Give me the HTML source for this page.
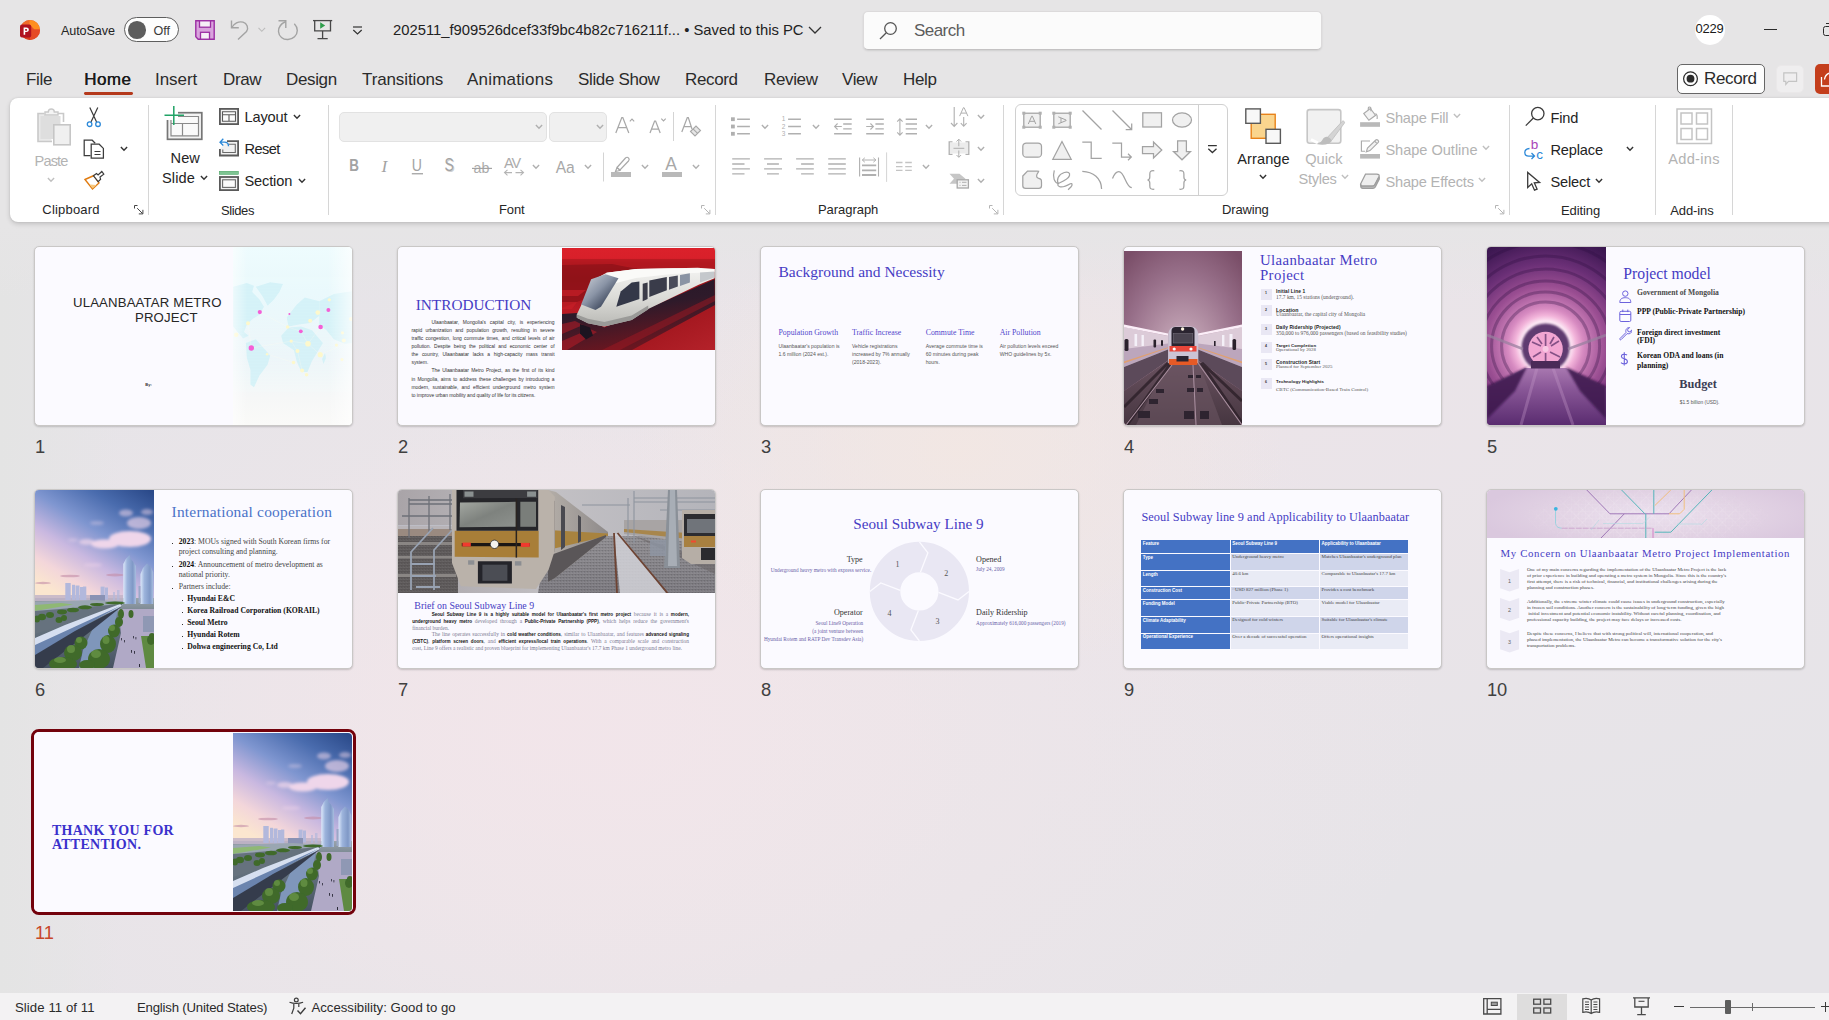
<!DOCTYPE html>
<html><head><meta charset="utf-8"><title>PowerPoint</title>
<style>
*{box-sizing:border-box;margin:0;padding:0}
html,body{width:1829px;height:1020px;overflow:hidden}
body{font-family:"Liberation Sans",sans-serif;color:#242424;position:relative;
 background:
  linear-gradient(90deg, #e4e4e4 0, rgba(228,228,228,0) 120px),
  radial-gradient(ellipse 330px 230px at 960px 450px, rgba(242,231,227,.95), rgba(242,231,227,0) 100%),
  radial-gradient(ellipse 420px 300px at 560px 720px, rgba(242,229,234,.9), rgba(242,229,234,0) 100%),
  radial-gradient(ellipse 800px 520px at 640px 740px, rgba(240,230,234,1), rgba(240,230,234,0) 100%),
  radial-gradient(ellipse 900px 500px at 1250px 400px, rgba(236,228,233,.9), rgba(236,228,233,0) 100%),
  #e6e4e8;}
.abs{position:absolute}
.t{position:absolute;white-space:nowrap;line-height:1}
svg{position:absolute;overflow:visible}
.sl svg[viewBox]{overflow:hidden}
.sl svg.ov{overflow:visible}
/* title bar */
#search{left:862.500px;top:11px;width:459px;height:39px;background:#fbfbfb;border:1px solid #dcdadb;border-bottom-color:#c4c2c3;border-radius:5px;box-shadow:0 1px 2px rgba(0,0,0,.10)}
.tb{top:71.400px;font-size:17px;color:#2b2b2b;letter-spacing:-.35px}
/* ribbon */
#ribbon{left:10px;top:98px;width:1840px;height:124px;background:#fff;border-radius:8px;box-shadow:0 2px 5px rgba(0,0,0,.16),0 0 2px rgba(0,0,0,.10)}
.sep{position:absolute;top:105px;width:1px;height:110px;background:#d6d6d6}
.gl{position:absolute;top:202.600px;font-size:13px;letter-spacing:-.4px;color:#262626;white-space:nowrap;line-height:16px}
.rl{position:absolute;white-space:nowrap;line-height:18px;font-size:14.600px;color:#242424;letter-spacing:-.15px}
.dis{color:#b3b3b3}
/* slides */
.sl{position:absolute;width:319px;height:180px;border:1px solid #c9c7c6;border-radius:5px;background:#fbfaff;overflow:hidden;box-shadow:0 1px 2px rgba(0,0,0,.18)}
.sl>.in{position:absolute;left:0;top:0;width:317px;height:178px;overflow:hidden}
.num{position:absolute;font-size:18.300px;color:#404040;line-height:18.300px}
.serif{font-family:"Liberation Serif",serif}
.sb{top:1000.800px;font-size:13.200px;color:#2b2b2b;letter-spacing:-.2px}
.c3{top:81.800px;font-size:7.800px;color:#5147cc}
.b3{top:95px;font-size:5.080px;line-height:8.050px;color:#555;white-space:nowrap}
.i4a{left:152px;font-size:4.850px;font-weight:bold;color:#1a1a1a;letter-spacing:.1px}
.i4b{left:152px;font-size:5.450px;color:#555}
.i5{left:150px;font-size:7.600px;font-weight:bold;color:#111}
.b6{left:143.700px;font-size:7.700px;color:#444}
.b6 b{color:#111}
.c6{left:152.300px;font-size:7.700px;font-weight:bold;color:#111}
.d6{width:1.500px;height:1.200px;background:#333}
.l7{font-family:"Liberation Serif",serif;font-size:5.450px;line-height:6.600px;height:6.600px;white-space:nowrap;color:#7c7a92}
.l7 b{font-family:"Liberation Sans",sans-serif;font-size:4.600px;color:#151515}
.h8{top:65.800px;font-size:8.100px;color:#333}
.p8{font-size:5.250px;color:#6a5fa8}
.th9{font-size:4.500px;font-weight:bold;color:#fff;padding:.7px 0 0 1.700px;line-height:5px;white-space:nowrap;overflow:hidden}
.td9{font-family:"Liberation Serif",serif;font-size:4.900px;color:#444;padding:0 0 0 1.700px;line-height:5.600px;white-space:nowrap;overflow:hidden}
.p10{left:39.900px;font-family:"Liberation Serif",serif;font-size:4.980px;line-height:6.080px;color:#444;white-space:nowrap}
/* status */
#status{left:0;top:993px;width:1829px;height:27px;background:#f3f2f3}
</style></head><body>

<div class="abs" style="left:0;top:0;width:1829px;height:300px;background:linear-gradient(#e6e5e6 0,#e6e5e6 225px,rgba(230,229,230,0) 300px)"></div>
<!-- ================= TITLE BAR ================= -->
<div id="titlebar">
<div class="abs" id="search"></div>
<!-- ppt logo -->
<svg style="left:20px;top:20px" width="20" height="20" viewBox="0 0 20 20">
 <defs><clipPath id="lc"><circle cx="10" cy="10" r="10"/></clipPath></defs>
 <g clip-path="url(#lc)">
  <rect width="20" height="20" fill="#e8502a"/>
  <path d="M9 0h11v9.5h-5.5L9 4z" fill="#ff8f1f"/>
  <path d="M0 0h9.5v6H0z" fill="#ef6a2a"/>
  <path d="M9 9.5h11V20H9z" fill="#e64a25"/>
  <path d="M0 10h10v10H0z" fill="#d83b1d"/>
 </g>
 <rect x="0" y="4.6" width="11.2" height="13" rx="2" fill="#b0121f"/>
 <path d="M3.6 7.6h2.7c1.6 0 2.5.9 2.5 2.2s-1 2.3-2.6 2.3H5.2v2.6H3.6zM5.2 9v1.8h.9c.7 0 1.1-.3 1.1-.9S6.800 9 6.100 9z" fill="#fff"/>
</svg>
<span class="t" style="left:61px;top:24.900px;font-size:12.6px;letter-spacing:-.1px;color:#242424" id="autosave">AutoSave</span>
<div class="abs" style="left:124px;top:17px;width:55px;height:25px;border:1px solid #5e5e5e;border-radius:13px;background:#fdfdfd"></div>
<div class="abs" style="left:128px;top:21px;width:17.6px;height:17.6px;border-radius:50%;background:#5d5d5d"></div>
<span class="t" style="left:153.500px;top:24.900px;font-size:12.6px;color:#3a3a3a" id="off">Off</span>
<!-- save -->
<svg style="left:195px;top:20px" width="20" height="20" viewBox="0 0 20 20">
 <path d="M.8.800h18.400v18.400H3.200L.8 16.800z" fill="#d9a3dd" stroke="#9b2ea3" stroke-width="1.400"/>
 <rect x="4.500" y=".8" width="11" height="6.400" fill="#f6eef7" stroke="#9b2ea3" stroke-width="1.300"/>
 <rect x="5.500" y="12.300" width="9" height="6.900" fill="#f6eef7" stroke="#9b2ea3" stroke-width="1.300"/>
</svg>
<!-- undo -->
<svg style="left:230px;top:19px" width="20" height="22" viewBox="0 0 20 22" fill="none" stroke="#a3a3a3" stroke-width="1.400">
 <path d="M1.500 1.500v7.300h7.300"/><path d="M1.800 8.500C4 4.800 8.500 1.800 13 3.200c4 1.300 6 5.500 3.500 9.300L8 20.500"/>
</svg>
<svg style="left:258px;top:27px" width="8" height="6" viewBox="0 0 8 6" fill="none" stroke="#bdbdbd" stroke-width="1.100"><path d="M.5.800L3.800 4.300 7.100.8"/></svg>
<!-- redo -->
<svg style="left:277px;top:19px" width="22" height="22" viewBox="0 0 22 22" fill="none" stroke="#a3a3a3" stroke-width="1.400">
 <path d="M1.500 1.800h7.300v7.300"/><path d="M8.800 2.500C4.500 4.500 1.300 8.500 1.500 12.500c.3 5 4.500 8.300 9.500 8 5-.3 9.300-4.200 9.300-9 0-3-1.200-5-3-6.800"/>
</svg>
<!-- present -->
<svg style="left:313px;top:19px" width="20" height="21" viewBox="0 0 20 21" fill="none" stroke="#484848" stroke-width="1.300">
 <path d="M0 1.600h19.200"/><path d="M1.700 1.600v10.300h15.800V1.600"/><path d="M9.600 12v7.500M4.500 19.600h10.200"/>
 <path d="M7.200 3.300l5 3.200-5 3.200z" fill="#2f9e4c" stroke="none"/>
</svg>
<!-- qat -->
<svg style="left:352px;top:26px" width="11" height="10" viewBox="0 0 11 10" fill="none" stroke="#333" stroke-width="1.200"><path d="M1 1h9"/><path d="M1.300 4l4.200 4 4.200-4"/></svg>
<span class="t" style="left:393px;top:23px;font-size:14.800px;letter-spacing:-.01px;color:#222" id="title">202511_f909526dcef33f9bc4b82c716211f... • Saved to this PC</span>
<svg style="left:808px;top:26px" width="14" height="9" viewBox="0 0 14 9" fill="none" stroke="#333" stroke-width="1.300"><path d="M1 1l6 6 6-6"/></svg>
<!-- search icon -->
<svg style="left:879px;top:20.500px" width="19" height="19" viewBox="0 0 19 19" fill="none" stroke="#555" stroke-width="1.300"><circle cx="11.500" cy="7.500" r="5.800"/><path d="M7.300 11.700L1 18"/></svg>
<span class="t" style="left:914px;top:21.500px;font-size:17px;letter-spacing:-.55px;color:#5c5c5c" id="searcht">Search</span>
<div class="abs" style="left:1695px;top:15px;width:30px;height:30px;border-radius:50%;background:#fff"></div>
<span class="t" style="left:1695.500px;top:21.500px;font-size:13px;color:#1a1a1a;letter-spacing:-.2px" id="av">0229</span>
<div class="abs" style="left:1764px;top:29px;width:13px;height:1.300px;background:#2a2a2a"></div>
<div class="abs" style="left:1823px;top:25.500px;width:12px;height:10.500px;border:1.300px solid #2a2a2a;border-radius:2.500px"></div>
<div class="abs" style="left:1826px;top:23.200px;width:8px;height:1.300px;background:#2a2a2a"></div>
</div>

<!-- ================= TABS ================= -->
<div id="tabs">
<span class="t tb" style="left:26px">File</span>
<span class="t tb" style="left:84px;color:#1b1b1b;text-shadow:.4px 0 0 #1b1b1b;letter-spacing:.45px">Home</span>
<span class="t tb" style="left:155px;letter-spacing:-.05px">Insert</span>
<span class="t tb" style="left:223px">Draw</span>
<span class="t tb" style="left:286px">Design</span>
<span class="t tb" style="left:362px;letter-spacing:-.12px">Transitions</span>
<span class="t tb" style="left:467px;letter-spacing:.2px">Animations</span>
<span class="t tb" style="left:578px">Slide Show</span>
<span class="t tb" style="left:685px">Record</span>
<span class="t tb" style="left:764px">Review</span>
<span class="t tb" style="left:842px">View</span>
<span class="t tb" style="left:903px">Help</span>
<div class="abs" style="left:84px;top:92px;width:49px;height:2.800px;border-radius:1.400px;background:#b5391c"></div>
<div class="abs" style="left:1677px;top:64px;width:88px;height:30px;border:1px solid #666;border-radius:5px;background:#fdfdfd"></div>
<svg style="left:1683px;top:71px" width="16" height="16" viewBox="0 0 16 16"><circle cx="7.500" cy="7.700" r="6.900" fill="none" stroke="#2b2b2b" stroke-width="1.200"/><circle cx="7.500" cy="7.700" r="3.900" fill="#2b2b2b"/></svg>
<span class="t tb" style="left:1704px;top:70.400px" id="rec">Record</span>
<div class="abs" style="left:1776px;top:65px;width:28px;height:28px;border-radius:5px;background:#efeeef;border:1px solid #eae8e9"></div>
<svg style="left:1783px;top:72px" width="15" height="14" viewBox="0 0 15 14" fill="none" stroke="#c4c4c4" stroke-width="1.200"><path d="M.8.800h12.800v8.600H5.500L2.800 12.400V9.400H.8z"/></svg>
<div class="abs" style="left:1815px;top:64px;width:30px;height:30px;border-radius:5px;background:#c43e1c"></div>
<svg style="left:1820px;top:70px" width="12" height="18" viewBox="0 0 12 18" fill="none" stroke="#fff" stroke-width="1.300"><path d="M1.500 7v9h10"/><path d="M4.500 9.500c.5-4 3-6.500 7.500-7"/></svg>
</div>

<!-- ================= RIBBON ================= -->
<div class="abs" id="ribbon"></div>
<div id="rb">
<svg width="0" height="0"><defs>
 <symbol id="chv" viewBox="0 0 8 5" overflow="visible"><path d="M.9.100L4 3.300 7.100.1" fill="none" stroke-width="1.400"/></symbol>
 <symbol id="dlg" viewBox="0 0 10 10" overflow="visible"><path d="M.5 3.500V.5h3M3.200 3.200l5.300 5.300M4.800 8.900h4.100V4.800" fill="none" stroke-width="1"/></symbol>
</defs></svg>
<!-- ===== Clipboard ===== -->
<svg style="left:37px;top:108px" width="35" height="38" viewBox="0 0 35 38">
 <path d="M7.500 5.500H1v28h14" fill="#e9e9e9" stroke="#c9c9c9" stroke-width="1.600"/>
 <path d="M21 5.500h5.500V14" fill="none" stroke="#c9c9c9" stroke-width="1.600"/>
 <path d="M3.500 8h20v8H16v15H3.500z" fill="#dedede"/>
 <path d="M8 7V4h3.300a3 3 0 016 0H21v3z" fill="#f4f4f4" stroke="#c9c9c9" stroke-width="1.400"/>
 <rect x="16.800" y="16.800" width="16.400" height="20" fill="#f0f0f0" stroke="#c6c6c6" stroke-width="1.600"/>
</svg>
<span class="rl dis" style="left:34.500px;top:151.700px;letter-spacing:-.85px" id="paste">Paste</span>
<svg style="left:47px;top:178px" width="8" height="5" stroke="#c0c0c0"><use href="#chv"/></svg>
<!-- cut -->
<svg style="left:86px;top:107px" width="16" height="21" viewBox="0 0 16 21" fill="none">
 <path d="M3.800.5L10.600 15M11.800.5L5 15" stroke="#3b3b3b" stroke-width="1.200"/>
 <circle cx="3.600" cy="17.200" r="2.300" stroke="#2b88d8" stroke-width="1.300"/><circle cx="12" cy="17.200" r="2.300" stroke="#2b88d8" stroke-width="1.300"/>
</svg>
<!-- copy -->
<svg style="left:83px;top:139px" width="22" height="20" viewBox="0 0 22 20" fill="none" stroke="#3b3b3b" stroke-width="1.250">
 <path d="M7.500 16.500H1.200V1.200h8l3 3"/><path d="M8.200 5.200h8l4.200 4.200v9.800H8.200z" fill="#fff"/><path d="M11.500 12.500h6M11.500 15.500h6" stroke-width="1"/>
</svg>
<svg style="left:119.500px;top:146.500px" width="8" height="5" stroke="#333"><use href="#chv"/></svg>
<!-- format painter -->
<svg style="left:84px;top:170px" width="21" height="20" viewBox="0 0 21 20" fill="none">
 <path d="M1 9.500l9-4 5 7.500-6.500 6z" fill="#fff" stroke="#e07b10" stroke-width="1.400"/>
 <path d="M5.500 14.500l3 4 4-3.600z" fill="#f7c77c"/>
 <path d="M9.500 5.800l3-2.200 1.600 1.300L17.800 1.500l2 2.600-3.800 3 .6 2.200-2.400 2.300z" fill="#fff" stroke="#3b3b3b" stroke-width="1.200"/>
</svg>
<span class="gl" style="left:42.300px;letter-spacing:.2px;top:201.700px" id="g1">Clipboard</span>
<svg style="left:134px;top:205px" width="10" height="10" stroke="#444"><use href="#dlg"/></svg>
<div class="sep" style="left:148px"></div>
<!-- ===== Slides ===== -->
<svg style="left:164px;top:106px" width="39" height="35" viewBox="0 0 39 35" fill="none">
 <rect x="3.500" y="6.700" width="34.300" height="26.600" fill="#f3f3f3" stroke="#767676" stroke-width="1.700"/>
 <path d="M7 10.500h27.500v19.300H7z" stroke="#8a8a8a" stroke-width="1.200" fill="#fafafa"/>
 <path d="M7 17.500h27.500M18.500 17.500v12.300" stroke="#8a8a8a" stroke-width="1.200"/>
 <rect x="0" y="0" width="14" height="14" fill="#fff" stroke="none"/>
 <path d="M9.800 0v19M.5 9.300h19.500" stroke="#21a366" stroke-width="1.500"/>
</svg>
<span class="rl" style="left:170.500px;top:149.400px;letter-spacing:.1px" id="new">New</span>
<span class="rl" style="left:162px;top:169.400px;letter-spacing:.1px" id="slide">Slide</span>
<svg style="left:199.500px;top:176px" width="8" height="5" stroke="#333"><use href="#chv"/></svg>
<!-- layout -->
<svg style="left:219px;top:108px" width="20" height="17" viewBox="0 0 20 17" fill="none" stroke="#5a5a5a">
 <rect x=".9" y=".9" width="18.200" height="15.200" stroke-width="1.800" fill="#f1f1f1"/><path d="M3.500 3.700h13v9.600h-13zM3.500 6.800h13M10 6.800v6.500" stroke-width="1.100" fill="#fbfbfb"/>
</svg>
<span class="rl" style="left:244.500px;top:108.300px" id="layout">Layout</span>
<svg style="left:292.500px;top:114.500px" width="8" height="5" stroke="#333"><use href="#chv"/></svg>
<!-- reset -->
<svg style="left:219px;top:138px" width="20" height="19" viewBox="0 0 20 19" fill="none">
 <path d="M8 3.200h11.100v14.300H.9V11" stroke="#5a5a5a" stroke-width="1.800" fill="#f1f1f1"/><path d="M9.500 6.300h6.800v8.200H3.800v-3" stroke="#6a6a6a" stroke-width="1.100"/>
 <path d="M4.300.8L1 4.200l3.300 3.300M1.200 4.200h4.300c2.500 0 4 1.600 4 4" stroke="#2b88d8" stroke-width="1.300"/>
</svg>
<span class="rl" style="left:244.500px;top:140.300px;letter-spacing:-.6px" id="reset">Reset</span>
<!-- section -->
<svg style="left:219px;top:171px" width="20" height="20" viewBox="0 0 20 20" fill="none">
 <rect x=".3" y=".3" width="19" height="3" fill="#7ec492" stroke="#4ea667" stroke-width=".6"/>
 <rect x=".9" y="6" width="18.200" height="13.100" stroke="#5a5a5a" stroke-width="1.800" fill="#f1f1f1"/><rect x="3.600" y="8.800" width="12.800" height="7.600" stroke="#6a6a6a" stroke-width="1.100" fill="#fbfbfb"/>
</svg>
<span class="rl" style="left:244.500px;top:172.400px" id="section">Section</span>
<svg style="left:297.500px;top:178.500px" width="8" height="5" stroke="#333"><use href="#chv"/></svg>
<span class="gl" style="left:221px" id="g2">Slides</span>
<div class="sep" style="left:328px"></div>
<!-- ===== Font ===== -->
<div class="abs" style="left:339px;top:112px;width:208px;height:30px;background:#f0f0f0;border:1px solid #e2e2e2;border-radius:5px"></div>
<svg style="left:535px;top:125px" width="8" height="5" stroke="#b0b0b0"><use href="#chv"/></svg>
<div class="abs" style="left:549px;top:112px;width:58px;height:30px;background:#f0f0f0;border:1px solid #e2e2e2;border-radius:5px"></div>
<svg style="left:595.500px;top:125px" width="8" height="5" stroke="#b0b0b0"><use href="#chv"/></svg>
<svg style="left:615px;top:114px" width="90" height="26" viewBox="0 0 90 26" fill="none" stroke="#a8a8a8" stroke-width="1.250">
 <path d="M.8 19L6.800 3.500h1L13.800 19M3 13.500h8.600"/><path d="M14.800 7.300l2.200-2.300 2.200 2.300" stroke-width="1.100"/>
 <path d="M35 19l4.600-12h1L45.200 19M36.800 15h6.600"/><path d="M46.300 4.600l2.200 2.300 2.200-2.300" stroke-width="1.100"/>
 <path d="M58.500-2v29" stroke="#d4d4d4" stroke-width="1"/>
 <path d="M66.800 18L72.300 3.500h1L77 15M69 12.500h7"/>
 <path d="M75.500 17.500l5.500-5.500 4.500 4.500-5.500 5.500zM78 14.800l4.600 4.600" fill="#e6e6e6" stroke-width="1.100"/>
</svg>
<svg style="left:345px;top:152px" width="360" height="30" viewBox="0 0 360 30">
 <g fill="#a3a3a3" font-family="Liberation Sans, sans-serif">
  <text x="4.300" y="19.500" font-size="17.200" font-weight="bold" transform="translate(4.300 0) scale(.78 1) translate(-4.300 0)">B</text>
  <text x="36.500" y="19.500" font-size="17.200" font-style="italic" font-family="Liberation Serif, serif">I</text>
  <text x="66.800" y="19.300" font-size="16.800" transform="translate(66.800 0) scale(.84 1) translate(-66.800 0)">U</text>
  <rect x="66.800" y="21.100" width="11.200" height="1.300"/>
  <text x="100.600" y="20.300" font-size="17.500" fill="#d0d0d0" transform="translate(100.600 0) scale(.8 1) translate(-100.600 0)">S</text>
  <text x="99.600" y="19.500" font-size="17.500" transform="translate(99.600 0) scale(.8 1) translate(-99.600 0)">S</text>
  <text x="128.500" y="21.300" font-size="15" transform="translate(128.500 0) scale(.95 1) translate(-128.500 0)" fill="#ababab">ab</text>
  <rect x="127" y="15.800" width="20" height="1.200"/>
  <text x="159" y="16" font-size="14.500" letter-spacing="-1.200" fill="#ababab">AV</text>
 </g>
 <g fill="none" stroke="#b4b4b4" stroke-width="1.100">
  <path d="M159.500 20.600h7.500M162.500 17.800l-3 2.800 3 2.800M170.500 20.600h8M175.500 17.800l3 2.800-3 2.800"/>
 </g>
 <g fill="#a8a8a8" font-family="Liberation Sans, sans-serif"><text x="210.800" y="21.300" font-size="17" letter-spacing="-.3" transform="translate(210.800 0) scale(.92 1) translate(-210.800 0)">Aa</text></g>
 <path d="M258.500 .5v29" stroke="#d4d4d4" stroke-width="1" fill="none"/>
 <!-- highlighter -->
 <g fill="none" stroke="#a8a8a8" stroke-width="1.200"><path d="M272 15.500l8.500-9.500c1-1 2.200-1 3 0 .9.900.9 2 0 3l-8.500 9zM270.500 19.500l1.500-4 3 3z"/></g>
 <rect x="266" y="20" width="20" height="5" fill="#b9b9b9"/>
 <g fill="#a8a8a8" font-family="Liberation Sans, sans-serif"><text x="320.200" y="17.500" font-size="17.500">A</text></g>
 <rect x="317" y="20" width="20" height="5" fill="#b9b9b9"/>
</svg>
<svg style="left:532px;top:165px" width="8" height="5" stroke="#b0b0b0"><use href="#chv"/></svg>
<svg style="left:583.500px;top:165px" width="8" height="5" stroke="#b0b0b0"><use href="#chv"/></svg>
<svg style="left:640.500px;top:165px" width="8" height="5" stroke="#b0b0b0"><use href="#chv"/></svg>
<svg style="left:691.500px;top:165px" width="8" height="5" stroke="#b0b0b0"><use href="#chv"/></svg>
<span class="gl" style="left:499px;letter-spacing:-.1px;top:201.700px" id="g3">Font</span>
<svg style="left:701px;top:205px" width="10" height="10" stroke="#b4b4b4"><use href="#dlg"/></svg>
<div class="sep" style="left:715px"></div>
<!-- ===== Paragraph ===== -->
<svg style="left:720px;top:100px" width="290" height="100" viewBox="0 0 290 100" fill="none" stroke="#b0b0b0" stroke-width="1.400">
 <!-- bullets -->
 <g fill="#b0b0b0" stroke="none"><rect x="11" y="17.300" width="3.800" height="3.800"/><rect x="11" y="24.600" width="3.800" height="3.800"/><rect x="11" y="31.900" width="3.800" height="3.800"/></g>
 <path d="M17.100 19.200h12.800M17.100 26.500h12.800M17.100 33.800h12.800"/>
 <!-- numbering -->
 <g fill="#b0b0b0" stroke="none" font-family="Liberation Sans, sans-serif" font-size="6.500"><text x="61.800" y="21.400">1</text><text x="61.800" y="28.900">2</text><text x="61.800" y="36.400">3</text></g>
 <path d="M68.100 19.200h12.800M68.100 26.500h12.800M68.100 33.800h12.800"/>
 <!-- decrease indent -->
 <path d="M114.100 19.200h17.600M114.100 33.800h17.600M123.200 24h8.500M123.200 28.900h8.500"/>
 <path d="M114.600 26.500h7.200M117.600 23.500l-3 3 3 3" stroke-width="1.100"/>
 <!-- increase indent -->
 <path d="M146.200 19.200h17.600M146.200 33.800h17.600M155.400 24h8.400M155.400 28.900h8.400"/>
 <path d="M146.200 26.500h7.200M150.400 23.500l3 3-3 3" stroke-width="1.100"/>
 <!-- line spacing -->
 <path d="M185.700 19.200H197M185.700 24H197M185.700 28.900H197M185.700 33.800H197"/>
 <path d="M179.900 19v16M177.200 21.600l2.700-2.800 2.700 2.800M177.200 32.400l2.700 2.800 2.700-2.800" stroke-width="1.100"/>
 <!-- align row -->
 <path d="M12.200 58.900h17.700M12.200 64h12.300M12.200 68.900h17.700M12.200 73.900h12.300"/>
 <path d="M44.100 58.900H62M47 64h11.900M44.100 68.900H62M47 73.900h11.900"/>
 <path d="M76.100 58.900h17.700M81.100 64h12.700M76.100 68.900h17.700M81.100 73.900h12.700"/>
 <path d="M108.200 58.900h17.600M108.200 64h17.600M108.200 68.900h17.600M108.200 73.900h17.600"/>
 <!-- distributed -->
 <path d="M139.600 57.400v19.100M158.500 57.400v19.100" stroke-width="1.100"/>
 <path d="M142.300 60h13.600M144.800 57.800l-2.500 2.200 2.500 2.200M153.400 57.800l2.500 2.200-2.500 2.200" stroke-width="1"/>
 <path d="M142 65.400h14.200M142 70.400h14.200M142 75h14.200" stroke-width="1.800"/>
 <path d="M166.600 52.400v29.500" stroke="#d4d4d4" stroke-width="1"/>
 <!-- columns -->
 <path d="M176 62.500h6.500M176 66.600h6.500M176 70.400h6.500M185.200 62.500h6.600M185.200 66.600h6.600M185.200 70.400h6.600" stroke="#c4c4c4" stroke-width="1.300"/>
 <!-- text direction -->
 <path d="M234.200 6.900v19.300M231 23l3.200 3.400 3.200-3.400M243.700 17v9.300M240.800 23.200l2.900 3.100 2.900-3.100" stroke-width="1.100"/>
 <path d="M239.600 16.100l3.800-8.400h.7l3.800 8.400M241 13.100h5.500" stroke-width="1"/>
 <!-- align text -->
 <path d="M232.500 41.800h-3.300v12.500h3.300M245.500 41.800h3.300v12.500h-3.300" stroke-width="1.300"/>
 <rect x="230" y="42.500" width="18" height="11" fill="#ececec" stroke="none"/>
 <path d="M233.500 48.300h10.800M238.800 39.300v7M236.500 41.500l2.300-2.300 2.300 2.300M238.800 50.500v6.700M236.500 55l2.300 2.300 2.300-2.300" stroke-width="1"/>
 <!-- smartart -->
 <path d="M229.500 73.800h10l6 5-6 5h-10l4.500-5z" fill="#c6c6c6" stroke="none"/>
 <rect x="237.200" y="79.800" width="11.200" height="8.200" fill="#f3f3f3" stroke="#a8a8a8" stroke-width="1.300"/>
 <path d="M239.500 82.300h1M242 82.300h4.500M239.500 85.400h1M242 85.400h4.500" stroke-width="1"/>
</svg>
<svg style="left:760.500px;top:125px" width="8" height="5" stroke="#b0b0b0"><use href="#chv"/></svg>
<svg style="left:811.500px;top:125px" width="8" height="5" stroke="#b0b0b0"><use href="#chv"/></svg>
<svg style="left:924.500px;top:125px" width="8" height="5" stroke="#b0b0b0"><use href="#chv"/></svg>
<svg style="left:921.500px;top:165px" width="8" height="5" stroke="#b0b0b0"><use href="#chv"/></svg>
<svg style="left:976.500px;top:114.800px" width="8" height="5" stroke="#b0b0b0"><use href="#chv"/></svg>
<svg style="left:976.500px;top:146.800px" width="8" height="5" stroke="#b0b0b0"><use href="#chv"/></svg>
<svg style="left:976.500px;top:178.800px" width="8" height="5" stroke="#b0b0b0"><use href="#chv"/></svg>
<span class="gl" style="left:818px;letter-spacing:-.05px;top:201.700px" id="g4">Paragraph</span>
<svg style="left:989px;top:205px" width="10" height="10" stroke="#b4b4b4"><use href="#dlg"/></svg>
<div class="sep" style="left:1003px"></div>
<!-- ===== Drawing ===== -->
<div class="abs" style="left:1015px;top:104px;width:213px;height:92px;border:1px solid #d0d0d0;border-radius:6px;background:#fff"></div>
<div class="abs" style="left:1198px;top:105px;width:1px;height:90px;background:#d0d0d0"></div>
<svg style="left:1015px;top:104px" width="214" height="92" viewBox="0 0 214 92" fill="none" stroke="#a3a3a3" stroke-width="1.250">
 <!-- row1 -->
 <rect x="8.800" y="9.200" width="16.400" height="14" fill="#f0f0f0"/>
 <g fill="#b0b0b0" stroke="none"><rect x="7.300" y="7.700" width="3" height="3"/><rect x="23.700" y="7.700" width="3" height="3"/><rect x="7.300" y="21.700" width="3" height="3"/><rect x="23.700" y="21.700" width="3" height="3"/></g>
 <path d="M13.300 20l3.400-7.800h.7L20.800 20M14.500 17.300h5.100" stroke-width="1"/>
 <rect x="38.800" y="9.200" width="16.400" height="14" fill="#f0f0f0"/>
 <g fill="#b0b0b0" stroke="none"><rect x="37.300" y="7.700" width="3" height="3"/><rect x="53.700" y="7.700" width="3" height="3"/><rect x="37.300" y="21.700" width="3" height="3"/><rect x="53.700" y="21.700" width="3" height="3"/></g>
 <path d="M43.300 12.800l7.800 3.200v.6l-7.800 3.200M46 14v4.800" stroke-width="1"/>
 <path d="M67.500 6.500l19 19"/>
 <path d="M97.500 6.500l19 19M116.700 19.500v6h-6"/>
 <rect x="127.800" y="8.800" width="18.700" height="14.200" fill="#f0f0f0"/>
 <ellipse cx="167" cy="16" rx="9.500" ry="7.200" fill="#f0f0f0"/>
 <!-- row2 -->
 <rect x="7.800" y="39" width="18.700" height="14.200" rx="3.500" fill="#f0f0f0"/>
 <path d="M47 37.500L37.800 55.300h18.400z" fill="#f0f0f0"/>
 <path d="M67.300 38.200h8.900v16.200h10.500"/>
 <path d="M97.300 39h9.200v14h9.500M113 49.800l3.300 3.200-3.300 3.200"/>
 <path d="M127.500 42.500h11V38l8.300 8-8.300 8v-4.500h-11z" fill="#f0f0f0"/>
 <path d="M162.600 36.800h8.800v10.700h4.100L167 55.800l-8.500-8.300h4.100z" fill="#f0f0f0"/>
 <!-- row3 -->
 <path d="M7.800 72l4.700-5h9.500c2.200 0 2.200 0 1 1.600-1.800 2.300-2 4.700.2 5.500 3.300 1 3.300 1.700 3.300 4.500v3.200c0 1.800-1.200 2.600-2.800 2.600H10.600c-1.700 0-2.800-.8-2.800-2.600z" fill="#f0f0f0"/>
 <path d="M39.300 66.400c-2 7 0 12.500 4.500 13.600M43.800 80c-3-4-.5-9.500 5.500-11.500 3.500-1.200 6 .3 5.200 3-.8 3-5.800 5.600-10.200 7.500-2 .8-2 2.500 0 3.500 3 1.500 8-1 11-2.700 1.800-1 2.500 1 .8 3l-3 3"/>
 <path d="M67.300 67.400c11 .3 19 7 19.300 17.600"/>
 <path d="M97.500 74.500c1.500-4 3.500-7 6.300-7 6 0 6.500 15.500 13 16.200"/>
 <path d="M139.300 66.800c-3.800-.4-4.500.8-4.500 3.400v2.800c0 1.800-.6 2.800-2.300 3 1.700.2 2.300 1.200 2.300 3v2.800c0 2.600.7 3.800 4.500 3.400"/>
 <path d="M164.400 66.800c3.800-.4 4.500.8 4.500 3.400v2.800c0 1.800.6 2.800 2.300 3-1.700.2-2.300 1.200-2.300 3v2.800c0 2.600-.7 3.800-4.500 3.400"/>
 <!-- expander -->
 <path d="M193 41.700h8.800M193.300 44.800l4.100 3.700 4.100-3.700" stroke="#333" stroke-width="1.300"/>
</svg>
<!-- arrange -->
<svg style="left:1244px;top:107px" width="38" height="38" viewBox="0 0 38 38">
 <rect x="7.200" y="7.300" width="24" height="24" fill="#fad58e" stroke="#e8821a" stroke-width="1.400"/>
 <rect x="1.800" y="1.900" width="14.600" height="14.400" fill="#f8f8f8" stroke="#5a5a5a" stroke-width="1.400"/>
 <rect x="22" y="22.300" width="14.400" height="14" fill="#f8f8f8" stroke="#5a5a5a" stroke-width="1.400"/>
</svg>
<span class="rl" style="left:1237.300px;top:150.300px;letter-spacing:.07px" id="arrange">Arrange</span>
<svg style="left:1258.500px;top:175.300px" width="8" height="5" stroke="#333"><use href="#chv"/></svg>
<!-- quick styles -->
<svg style="left:1305px;top:107px" width="42" height="40" viewBox="0 0 42 40">
 <rect x="2.200" y="2.600" width="33.600" height="33.600" rx="2.500" fill="#f1f1f1" stroke="#c6c6c6" stroke-width="1.600"/>
 <path d="M6 32.500l7 3.500" stroke="#fff" stroke-width="3"/>
 <path d="M38.800 14.200c.8.500.9 1.300.5 2.100L26.500 33.500l-4.300-2.800L37 14.600c.5-.6 1.200-.8 1.800-.4z" fill="#d4d4d4" stroke="#bcbcbc" stroke-width=".8"/>
 <path d="M22.800 30c2.300 1 3.600 2.300 4 4-2 3.300-8 4.500-15.500 3 3.800-.7 5-2.300 6.300-4.500 1.300-2 3-3 5.200-2.500z" fill="#bdbdbd"/>
</svg>
<span class="rl dis" style="left:1305.300px;top:150.300px;letter-spacing:-.03px" id="quick">Quick</span>
<span class="rl dis" style="left:1298.600px;top:170.100px;letter-spacing:-.3px" id="styles">Styles</span>
<svg style="left:1340.500px;top:174.800px" width="8" height="5" stroke="#c0c0c0"><use href="#chv"/></svg>
<!-- shape fill -->
<svg style="left:1360px;top:106px" width="21" height="22" viewBox="0 0 21 22" fill="none" stroke="#ababab" stroke-width="1.150">
 <path d="M3.800 7.500l6.500-5 5.300 6.800-6.700 5z" fill="#f3f3f3"/><path d="M8.300 4V2.300c0-1.800 2.600-1.800 2.600 0v3"/><path d="M15.500 7.500c1.500.8 2 2.800 1.600 5.500"/>
 <rect x=".1" y="16.200" width="19.900" height="4.600" fill="#b9b9b9" stroke="none"/>
</svg>
<span class="rl dis" style="left:1385.400px;top:108.900px;letter-spacing:-.2px" id="sfill">Shape Fill</span>
<svg style="left:1453.300px;top:114px" width="8" height="5" stroke="#c0c0c0"><use href="#chv"/></svg>
<!-- shape outline -->
<svg style="left:1360px;top:138px" width="21" height="22" viewBox="0 0 21 22" fill="none" stroke="#ababab" stroke-width="1.150">
 <path d="M10 3H1.400v10.200H5"/><path d="M6.300 13.800l1.200-3.800 8.300-8c1.300-1.200 3.700 1 2.500 2.400L10 12.600zM14.600 3.200l2.500 2.500" fill="#f3f3f3"/>
 <rect x=".1" y="16" width="19.900" height="4.600" fill="#b9b9b9" stroke="none"/>
</svg>
<span class="rl dis" style="left:1385.400px;top:140.700px;letter-spacing:-.03px" id="sout">Shape Outline</span>
<svg style="left:1482.400px;top:146px" width="8" height="5" stroke="#c0c0c0"><use href="#chv"/></svg>
<!-- shape effects -->
<svg style="left:1360px;top:173px" width="21" height="17" viewBox="0 0 21 17" fill="none" stroke="#9e9e9e" stroke-width="1.200">
 <path d="M.7 10.800L5.500 1.200h11.200c2 0 3 .8 2.300 2.400l-4.200 8.200c-.5 1-1.300 1.400-2.500 1.400H2.300c-1.400 0-2.200-1-1.600-2.400z" fill="#efefef"/>
 <path d="M.7 10.800v2.300c0 1.400.8 2.400 2.200 2.400h9.800c1.200 0 2-.5 2.600-1.500l4-8V3.500l-4.500 8.300c-.5 1-1.300 1.400-2.500 1.400H2.300c-1 0-1.600-1-1.600-2.400z" fill="#b5b5b5"/>
</svg>
<span class="rl dis" style="left:1385.400px;top:172.700px;letter-spacing:-.17px" id="seff">Shape Effects</span>
<svg style="left:1478.300px;top:178px" width="8" height="5" stroke="#c0c0c0"><use href="#chv"/></svg>
<span class="gl" style="left:1222px;letter-spacing:-.15px;top:201.700px" id="g5">Drawing</span>
<svg style="left:1495px;top:205px" width="10" height="10" stroke="#b4b4b4"><use href="#dlg"/></svg>
<div class="sep" style="left:1509px"></div>
<!-- ===== Editing ===== -->
<svg style="left:1525px;top:106px" width="21" height="21" viewBox="0 0 21 21" fill="none" stroke="#3b3b3b" stroke-width="1.300"><circle cx="12.800" cy="7.600" r="6.200"/><path d="M8.400 12L.8 19.600"/></svg>
<span class="rl" style="left:1550.400px;top:108.900px" id="find">Find</span>
<svg style="left:1524px;top:139px" width="21" height="21" viewBox="0 0 21 21" fill="none">
 <path d="M5.500 9.500C2 9.800.8 12 .8 13.500c0 2 1.500 3.600 4 3.600h5.500M7.500 14l3 3-3 3" stroke="#2b88d8" stroke-width="1.300"/>
 <text x="6.800" y="10.300" font-family="Liberation Sans, sans-serif" font-size="13.500" fill="#a846b8">b</text>
 <text x="12.300" y="20.300" font-family="Liberation Sans, sans-serif" font-size="13.500" fill="#2b88d8">c</text>
</svg>
<span class="rl" style="left:1550.400px;top:140.700px" id="replace">Replace</span>
<svg style="left:1625.500px;top:146.500px" width="8" height="5" stroke="#333"><use href="#chv"/></svg>
<svg style="left:1526px;top:171px" width="16" height="21" viewBox="0 0 16 21" fill="none" stroke="#3b3b3b" stroke-width="1.300"><path d="M1.700 1.500v15l4-3.700 2.800 6.400 2.600-1.100-2.800-6.300 5.300-.3z" fill="#fff"/></svg>
<span class="rl" style="left:1550.400px;top:172.700px" id="select">Select</span>
<svg style="left:1594.800px;top:178.500px" width="8" height="5" stroke="#333"><use href="#chv"/></svg>
<span class="gl" style="left:1561px;letter-spacing:-.1px" id="g6">Editing</span>
<div class="sep" style="left:1654.500px"></div>
<!-- ===== Add-ins ===== -->
<svg style="left:1676px;top:108px" width="37" height="37" viewBox="0 0 37 37" fill="none" stroke="#c4c4c4" stroke-width="1.500">
 <rect x="1" y="1" width="34.500" height="34.500"/><rect x="5" y="5" width="11" height="11"/><rect x="20.500" y="5" width="11" height="11"/><rect x="5" y="20.500" width="11" height="11"/><rect x="20.500" y="20.500" width="11" height="11"/>
</svg>
<span class="rl dis" style="left:1668.300px;top:150.300px;letter-spacing:.28px" id="addins">Add-ins</span>
<span class="gl" style="left:1670.200px;letter-spacing:-.1px" id="g7">Add-ins</span>
<div class="sep" style="left:1732px"></div>
</div>

<!-- ================= SLIDES ================= -->
<div id="slides">
<div class="abs" style="left:31px;top:729px;width:325px;height:186px;border:3.200px solid #73020c;border-radius:8px"></div>
<span class="num" style="left:34.9px;top:437.6px">1</span>
<span class="num" style="left:397.9px;top:437.6px">2</span>
<span class="num" style="left:760.9px;top:437.6px">3</span>
<span class="num" style="left:1123.9px;top:437.6px">4</span>
<span class="num" style="left:1486.9px;top:437.6px">5</span>
<span class="num" style="left:34.9px;top:680.6px">6</span>
<span class="num" style="left:397.9px;top:680.6px">7</span>
<span class="num" style="left:760.9px;top:680.6px">8</span>
<span class="num" style="left:1123.9px;top:680.6px">9</span>
<span class="num" style="left:1486.9px;top:680.6px">10</span>
<span class="num" style="left:34.9px;top:923.6px;color:#c8472b">11</span>

<div class="sl" id="s1" style="left:34px;top:246px"><div class="in">
<svg style="left:198px;top:0" width="119" height="178" viewBox="198 0 119 178">
 <defs>
  <linearGradient id="m1" x1="0" y1="0" x2="0" y2="1"><stop offset="0" stop-color="#eefcfe"/><stop offset=".25" stop-color="#e9f8fb"/><stop offset=".62" stop-color="#ecf4f8"/><stop offset=".85" stop-color="#f6f7f7"/><stop offset="1" stop-color="#fafaf8"/></linearGradient>
  <linearGradient id="m2" x1="0" y1="0" x2="1" y2="0"><stop offset="0" stop-color="#fff" stop-opacity=".55"/><stop offset=".12" stop-color="#fff" stop-opacity="0"/><stop offset=".8" stop-color="#fff" stop-opacity="0"/><stop offset="1" stop-color="#fff" stop-opacity=".7"/></linearGradient>
  <filter id="bl1" x="-5%" y="-5%" width="110%" height="110%"><feGaussianBlur stdDeviation=".7"/></filter><pattern id="dots" width="1.500" height="1.500" patternUnits="userSpaceOnUse"><circle cx=".75" cy=".75" r=".38" fill="#f2fcfe"/></pattern>
 </defs>
 <rect x="198" y="0" width="119" height="178" fill="url(#m1)"/>
 <g fill="#c8eef6" opacity=".75" filter="url(#bl1)">
  <path d="M198.2 39.7L211.8 36.1L219.0 38.8L217.2 45.1L224.5 52.4L229.0 59.7L224.5 67.8L217.2 72.3L211.8 77.8L209.0 85.0L213.6 88.7L208.1 91.4L202.7 85.0L198.2 79.6z"/>
  <path d="M220.8 39.7L235.3 35.2L248.0 37.0L244.4 45.1L239.0 52.4L232.6 58.7L227.2 48.8z"/>
  <path d="M210.900 95.900l9.900-3.600 8.200 9.100 6.300 7.200-2.700 9.100-8.100 10.900-5.500 11.700-3.600-2.700v-14.500l-3.600-12.700z"/>
  <path d="M251.700 70.500l9.900-12.700 8.200-7.200 14.500 3.600v14.500l-9.100 7.300-12.700 1.800-9 1.800z"/>
  <path d="M284.300 54.200l14.500-7.200 18.200-2.800v51.700l-7.300.9-10.900-4.500-7.300-9.100-7.200-5.400z"/>
  <path d="M246.200 88.700l7.300-8.200 12.700-.9 10.800 3.600 10.900 12.700-5.400 9.100-5.500 9-4.500 10.900h-6.300l-4.600-10.900-2.700-10.800-10.900-7.300z"/>
  <path d="M287 112l3-6 1 5-2.500 6z"/>
 </g>
 <g><rect x="198" y="30" width="119" height="115" fill="url(#dots)" opacity=".8"/></g>
 <g stroke="#fffdf0" stroke-width=".35" opacity=".8" fill="none"><path d="M224.800 65.100l27.800 14.900M216.300 101l39.900-6.900 16.800 2.700 12.200 10.900 22.300-9.600M232.100 107.200l26.400 8.300 13.100 12.300M213 76.300l3.300 24.700M252.600 80l13.200 4.300 7.200 12.500M285.600 80l-12.600 16.800M256.200 94.100l6.300 10 4.600 19.400"/></g>
 <g fill="#f45fd6"><circle cx="224.800" cy="65.100" r="2.100"/><circle cx="254.400" cy="66.900" r="1"/><circle cx="293.400" cy="62.900" r="2"/><circle cx="285.600" cy="80" r="2.300"/><circle cx="265.800" cy="84.300" r="1.900"/><circle cx="216.300" cy="101" r="2.700"/></g>
 <g fill="#fdf8cc"><circle cx="213" cy="76.300" r="2"/><circle cx="201.200" cy="87.800" r="2.200"/><circle cx="252.600" cy="80" r="1.800"/><circle cx="282.800" cy="65.600" r="2.400"/><circle cx="275.200" cy="73.800" r="2"/><circle cx="294.300" cy="52.800" r="1.600"/><circle cx="256.200" cy="94.100" r="1.600"/><circle cx="273" cy="96.800" r="2.800"/><circle cx="262.500" cy="104.100" r="2"/><circle cx="285.200" cy="107.700" r="2.600"/><circle cx="258.500" cy="115.500" r="1.800"/><circle cx="267.100" cy="123.500" r="2"/><circle cx="271.600" cy="127.800" r="1.800"/><circle cx="232.100" cy="107.200" r="1.200"/><circle cx="301.500" cy="98.100" r="1.600"/><circle cx="308.800" cy="93.600" r="2"/><circle cx="307" cy="112.600" r="1.600"/><circle cx="307.500" cy="85.800" r="1.600"/><circle cx="316" cy="72" r="2"/></g>
 <rect x="198" y="0" width="119" height="178" fill="url(#m2)"/>
</svg>
<div class="t" style="left:38px;top:48.800px;font-size:13.200px;letter-spacing:.15px;line-height:14.700px;color:#262626;white-space:pre;text-align:left" id="s1t">ULAANBAATAR METRO
<span style="margin-left:62px">PROJECT</span></div>
<span class="t" style="left:110.300px;top:136.300px;font-size:4px;font-weight:bold;color:#333">By:</span>
</div></div>
<div class="sl" id="s2" style="left:397px;top:246px"><div class="in">
<svg style="left:164px;top:.7px" width="153" height="102" viewBox="0 0 153 102">
 <defs>
  <linearGradient id="r1" x1="0" y1="0" x2="0" y2="1"><stop offset="0" stop-color="#db212b"/><stop offset=".1" stop-color="#d8202a"/><stop offset=".14" stop-color="#b81a22"/><stop offset=".3" stop-color="#9a141a"/><stop offset=".6" stop-color="#b81a24"/><stop offset="1" stop-color="#c01c26"/></linearGradient>
  <linearGradient id="r2" x1="0" y1="0" x2="1" y2="1"><stop offset="0" stop-color="#c01c26"/><stop offset=".6" stop-color="#a2161e"/><stop offset="1" stop-color="#b4222a"/></linearGradient>
  <linearGradient id="tb" x1="0" y1="0" x2="0" y2="1"><stop offset="0" stop-color="#f4f4f2"/><stop offset=".5" stop-color="#dcdcd8"/><stop offset="1" stop-color="#b8b8b4"/></linearGradient>
  <linearGradient id="ws" x1="0" y1="0" x2="1" y2="1"><stop offset="0" stop-color="#d4d8de"/><stop offset=".45" stop-color="#8a94a6"/><stop offset=".7" stop-color="#4e586c"/><stop offset="1" stop-color="#aab4c4"/></linearGradient><linearGradient id="tk" x1="0" y1="0" x2=".35" y2="1"><stop offset="0" stop-color="#241828"/><stop offset=".5" stop-color="#2e1a2a"/><stop offset="1" stop-color="#6a1620"/></linearGradient>
 </defs>
 <rect width="153" height="102" fill="url(#r1)"/>
 <path d="M0 11h153v10L60 17 0 16z" fill="#b01820" opacity=".7"/>
 <path d="M0 17l50-1 30 6-40 22L0 60z" fill="#8c1218" opacity=".75"/>
 <path d="M0 42h24l-8 6H0zM0 54h15l-5 7H0z" fill="#c82028" opacity=".7"/>
 <path d="M153 34v68H18z" fill="url(#r2)"/>
 <path d="M0 66l14.800-1 27.500 14.600L152.600 31.300 153 57 70 102H0z" fill="url(#tk)"/>
 <path d="M0 76l13-3 8 4L0 86zM0 93l28-12 7 3-30 18H0z" fill="#b81c26" opacity=".55"/><path d="M40 102l113-55v6L58 102z" fill="#a01822" opacity=".5"/>
 <path d="M14.800 66.400L25 45 35 30l9.500-5.300 29.600-3.800 37.300-.6 24.200-.5 17 1.100V30.200l-15.900 6.600-50.500 24.100-16.500 11-27.400 6.600-16.500-3.300-11-5.500z" fill="url(#tb)"/>
 <path d="M44.500 24.700l29.600-3.800 37.300-.6 41.200.6v3L110 26l-36 4-20 5z" fill="#fafaf8"/>
 <path d="M19.200 56.500l9.900-25.200 14.300-5 13.100 3.900L39 58.700l-5.500 3.300z" fill="url(#ws)"/>
 <path d="M54.300 58.700l4.400-15.300 11-8.800 7.700-1.100V51z" fill="#343848"/>
 <path d="M80.700 35.700l4.900-1.100V51l-4.900 2.200z" fill="#3c3c48"/>
 <path d="M87.300 32.400l17.500-3.300v13.200l-17.500 6.600z" fill="#3a3c4a"/>
 <path d="M107 29.100l8.800-1.700v11L107 41.700z" fill="#4a4c5a"/>
 <path d="M118 26.900l9.900-1.700v9.400L118 37.900z" fill="#8a94a4"/>
 <path d="M138 24.500l14.600-1v6L138 34.500z" fill="#c4c8cc"/>
 <path d="M14.800 66.400l11 4.400 16.500 3.300 27.400-6.600 16.500-10v4l-16.500 10.400-27.400 6.600-16.500-3.300-11-5.500z" fill="#9a9a98"/>
 <path d="M18 76l10 3.500 3 8-7 4-6-6z" fill="#1c1420"/>
</svg>
<span class="t serif" style="left:17.700px;top:50px;font-size:15.300px;color:#463cc4" id="s2h">INTRODUCTION</span>
<div class="abs" style="left:13.500px;top:72.400px;width:143px;font-size:4.950px;letter-spacing:-.04px;line-height:8.020px;color:#333" id="s2b"><div style="padding-left:20px;text-align:justify;text-align-last:justify;white-space:nowrap;height:8.020px">Ulaanbaatar, Mongolia's capital city, is experiencing</div><div style="text-align:justify;text-align-last:justify;white-space:nowrap;height:8.020px">rapid urbanization and population growth, resulting in severe</div><div style="text-align:justify;text-align-last:justify;white-space:nowrap;height:8.020px">traffic congestion, long commute times, and critical levels of air</div><div style="text-align:justify;text-align-last:justify;white-space:nowrap;height:8.020px">pollution. Despite being the political and economic center of</div><div style="text-align:justify;text-align-last:justify;white-space:nowrap;height:8.020px">the country, Ulaanbaatar lacks a high-capacity mass transit</div><div style="white-space:nowrap;height:8.020px">system.</div><div style="padding-left:20px;text-align:justify;text-align-last:justify;white-space:nowrap;height:8.020px">The Ulaanbaatar Metro Project, as the first of its kind</div><div style="text-align:justify;text-align-last:justify;white-space:nowrap;height:8.020px">in Mongolia, aims to address these challenges by introducing a</div><div style="text-align:justify;text-align-last:justify;white-space:nowrap;height:8.020px">modern, sustainable, and efficient underground metro system</div><div style="white-space:nowrap;height:8.020px">to improve urban mobility and quality of life for its citizens.</div></div>
</div></div>
<div class="sl" id="s3" style="left:760px;top:246px"><div class="in">
<span class="t serif" style="left:17.500px;top:17.200px;font-size:15.500px;color:#463cc4" id="s3h">Background and Necessity</span>
<span class="t serif c3" style="left:17.500px" id="s3a">Population Growth</span>
<span class="t serif c3" style="left:91px" id="s3b">Traffic Increase</span>
<span class="t serif c3" style="left:164.700px" id="s3c">Commute Time</span>
<span class="t serif c3" style="left:238.700px" id="s3d">Air Pollution</span>
<div class="abs b3" style="left:17.500px" id="s3e">Ulaanbaatar's population is<br>1.6 million (2024 est.).</div>
<div class="abs b3" style="left:91px" id="s3f">Vehicle registrations<br>increased by 7% annually<br>(2018-2023).</div>
<div class="abs b3" style="left:164.700px" id="s3g">Average commute time is<br>60 minutes during peak<br>hours.</div>
<div class="abs b3" style="left:238.700px" id="s3i">Air pollution levels exceed<br>WHO guidelines by 5x.</div>
</div></div>
<div class="sl" id="s4" style="left:1123px;top:246px"><div class="in">
<svg style="left:0;top:4px" width="118" height="174" viewBox="0 0 118 174">
 <defs>
  <radialGradient id="t4" cx=".5" cy=".62" r=".75"><stop offset="0" stop-color="#d4bccb"/><stop offset=".3" stop-color="#b897aa"/><stop offset=".65" stop-color="#98708a"/><stop offset="1" stop-color="#7a4e68"/></radialGradient>
  <linearGradient id="fl4" x1="0" y1="0" x2="0" y2="1"><stop offset="0" stop-color="#6a5260"/><stop offset="1" stop-color="#463640"/></linearGradient>
 </defs>
 <rect width="118" height="174" fill="url(#t4)"/>
 <path d="M0 76l44 9v14L0 118zM118 76l-44 9v14l44 19z" fill="#dccbd8"/>
 <path d="M0 73.500l44 9v2.200l-44-8.500zM118 73.500l-44 9v2.200l44-8.500z" fill="#fbeef8"/>
 <g fill="#f4f0f8"><rect x="10.500" y="83" width="2.600" height="12"/><rect x="17.500" y="84" width="2.400" height="11"/><rect x="98" y="84" width="2.400" height="11"/><rect x="105.500" y="83" width="3" height="13"/></g>
 <path d="M0 98l44-5.500v6L0 116zM118 98l-44-5.500v6l44 17.500z" fill="#bca6bc"/>
 <path d="M0 110.500l44-14.300v.9L0 112.300zM118 110.500l-44-14.300v.9l44 15.200z" fill="#e0a070"/>
 <path d="M0 116l44-17.500v11L0 140zM118 116l-44-17.500v11l44 30.500z" fill="#5c4a5a"/>
 <path d="M0 140l44-30.500h30L118 140v34H0z" fill="url(#fl4)"/>
 <path d="M44 109.500h30l24 64.500H12z" fill="#6e5864" opacity=".55"/>
 <path d="M0 156l44-44M3 174l44-62M118 172l-41-60M118 150l-40-38" stroke="#2c2028" stroke-width="3" opacity=".8"/>
 <path d="M2 174l46-60M72 174l-3-60M118 174L74 112" stroke="#a88e9e" stroke-width="1.100" fill="none"/>
 <g fill="#2e2430"><rect x="60" y="160" width="10" height="8"/><rect x="76" y="160" width="9" height="8"/><rect x="14" y="160" width="12" height="7"/><rect x="63" y="137" width="7" height="4"/><rect x="73" y="137" width="6" height="4"/><rect x="32" y="138" width="8" height="4"/><rect x="25" y="148" width="9" height="5"/><rect x="64" y="124" width="5" height="3"/><rect x="72" y="124" width="5" height="3"/></g>
 <!-- train -->
 <path d="M44.300 112V84c0-5 3-8.400 8-8.400h14c5 0 8 3.400 8 8.400v28z" fill="#cbc4d4"/>
 <path d="M47.500 80c0-2.500 1.500-4 4-4h15c2.500 0 4 1.500 4 4v18h-23z" fill="#2a2430"/>
 <rect x="49.200" y="82.500" width="19.600" height="9.500" fill="#4a4450" stroke="#7a7480" stroke-width=".5"/>
 <circle cx="58.600" cy="78" r="1.700" fill="#fff6e0"/>
 <path d="M45.500 95h27v5.500h-27z" fill="#e8463a"/>
 <circle cx="50.200" cy="98" r="1.600" fill="#fff"/><circle cx="67" cy="98" r="1.600" fill="#fff"/>
 <path d="M45 108h28.500v4.500c0 1-1 1.500-2 1.500h-24c-1.500 0-2.500-.5-2.500-1.500z" fill="#e65a26"/>
 <rect x="52.500" y="105" width="12" height="5.500" fill="#2a2430"/>
 <g fill="#2a222c"><rect x=".5" y="88" width="4" height="12" rx="1.500"/><rect x="29.500" y="88.500" width="2.600" height="8" rx="1"/><rect x="37" y="89" width="2" height="6" rx="1"/><rect x="108.500" y="88" width="3.600" height="11" rx="1.500"/><rect x="90" y="90" width="1.600" height="5"/></g>
</svg>
<div class="t serif" style="left:136px;top:6.200px;font-size:14.800px;line-height:14.600px;color:#463cc4;letter-spacing:.37px" id="s4h">Ulaanbaatar Metro<br>Project</div>
<div class="abs" style="left:136.700px;top:41.5px;width:11px;height:11px;background:#e9e7f4"></div><span class="t" style="left:141px;top:45.2px;font-size:3.500px;color:#333;font-weight:bold">1</span><span class="t i4a" style="top:43.2px">Initial Line 1</span><span class="t serif i4b" style="top:47.6px">17.7 km, 15 stations (underground).</span>
<div class="abs" style="left:136.700px;top:58.1px;width:11px;height:11px;background:#e9e7f4"></div><span class="t" style="left:141px;top:61.8px;font-size:3.500px;color:#333;font-weight:bold">2</span><span class="t i4a" style="top:60.5px;font-size:5.25px">Location</span><span class="t serif i4b" style="top:64.9px">Ulaanbaatar, the capital city of Mongolia</span>
<div class="abs" style="left:136.700px;top:77.4px;width:11px;height:11px;background:#e9e7f4"></div><span class="t" style="left:141px;top:81.1px;font-size:3.500px;color:#333;font-weight:bold">3</span><span class="t i4a" style="top:79.4px">Daily Ridership (Projected)</span><span class="t serif i4b" style="top:83.8px">350,000 to 976,000 passengers (based on feasibility studies)</span>
<div class="abs" style="left:136.700px;top:94.7px;width:11px;height:11px;background:#e9e7f4"></div><span class="t" style="left:141px;top:98.4px;font-size:3.500px;color:#333;font-weight:bold">4</span><span class="t i4a" style="top:96.5px;font-size:4.4px">Target Completion</span><span class="t serif i4b" style="top:101.0px;font-size:4.85px">Operational by 2028</span>
<div class="abs" style="left:136.700px;top:112.0px;width:11px;height:11px;background:#e9e7f4"></div><span class="t" style="left:141px;top:115.7px;font-size:3.500px;color:#333;font-weight:bold">5</span><span class="t i4a" style="top:114.2px">Construction Start</span><span class="t serif i4b" style="top:118.0px;font-size:4.95px">Planned for September 2025</span>
<div class="abs" style="left:136.700px;top:130.5px;width:11px;height:11px;background:#e9e7f4"></div><span class="t" style="left:141px;top:134.2px;font-size:3.500px;color:#333;font-weight:bold">6</span><span class="t i4a" style="top:133.3px;font-size:4.3px">Technology Highlights</span><span class="t serif i4b" style="top:139.9px;font-size:5.0px">CBTC (Communication-Based Train Control)</span>
</div></div>
<div class="sl" id="s5" style="left:1486px;top:246px"><div class="in">
<svg style="left:0;top:0" width="119" height="178" viewBox="0 0 119 178">
 <defs>
  <radialGradient id="t5" gradientUnits="userSpaceOnUse" cx="58.600" cy="99" r="125"><stop offset="0" stop-color="#fdeef8"/><stop offset=".2" stop-color="#fde6f4"/><stop offset=".245" stop-color="#f2b4da"/><stop offset=".3" stop-color="#d88cc2"/><stop offset=".36" stop-color="#c074b0"/><stop offset=".48" stop-color="#9a4e92"/><stop offset=".66" stop-color="#6a2f76"/><stop offset=".85" stop-color="#421a56"/><stop offset="1" stop-color="#2c1042"/></radialGradient>
  <linearGradient id="gnd5" x1="0" y1="0" x2="0" y2="1"><stop offset="0" stop-color="#a878b0"/><stop offset=".35" stop-color="#8a5898"/><stop offset="1" stop-color="#5a2c70"/></linearGradient>
  <filter id="bl5" x="-10%" y="-10%" width="120%" height="120%"><feGaussianBlur stdDeviation="1.200"/></filter>
 </defs>
 <rect width="119" height="178" fill="url(#t5)"/>
 <g fill="none" stroke="#2a0e40" stroke-opacity=".3" stroke-width="3"><circle cx="58.600" cy="99" r="44"/><circle cx="58.600" cy="99" r="54"/><circle cx="58.600" cy="99" r="65"/><circle cx="58.600" cy="99" r="77"/><circle cx="58.600" cy="99" r="90"/><circle cx="58.600" cy="99" r="104"/></g>
 <circle cx="58.600" cy="100.500" r="24" fill="#5e3a70" filter="url(#bl5)"/>
 <path d="M0 88l36 14M119 88L81 102" stroke="#9a80a0" stroke-width="2.600" opacity=".75"/>
 <path d="M0 141l38-20h41l40 20v37H0z" fill="url(#gnd5)"/>
 <path d="M0 139l40-19-12 24L0 172zM119 139l-40-19 14 24 26 28z" fill="#3a174c" opacity=".85" filter="url(#bl5)"/>
 <path d="M50 121l-16 57M66 121l20 57" stroke="#c498c8" stroke-width="3" opacity=".35"/>
 <circle cx="58.600" cy="102" r="17.200" fill="#f2a6d2"/>
 <g stroke="#6a3c74" stroke-width="1.700" opacity=".8"><path d="M58.600 87v12M58.600 106v10M45 95l9 4M63 105l10 5M46 110l8-5M64 99l8-5M50 90l5 7M67 90l-4 7"/></g>
 <circle cx="58.600" cy="102" r="3" fill="#f8c8e4"/>
 <rect x="44" y="114" width="29" height="7.500" fill="#4a2a58"/>
</svg>
<span class="t serif" style="left:136.200px;top:19.100px;font-size:15.700px;color:#463cc4" id="s5h">Project model</span>
<svg style="left:131.500px;top:42.500px" width="13" height="78" viewBox="0 0 13 78" fill="none" stroke="#6c62dc" stroke-width="1">
 <circle cx="6.300" cy="3.600" r="2.700"/><path d="M.8 12.500c0-3.600 2.200-4.800 5.500-4.800s5.500 1.200 5.500 4.800z"/>
 <rect x=".8" y="21.300" width="11" height="10.200" rx="1.300"/><path d="M.8 24.500h11M3.800 19.600v2.500M8.800 19.600v2.500"/>
 <path d="M1 48.500l6-6c-.8-2.700.8-5 3.600-5l-2 2.200.5 1.800 1.800.5 2-2.200c.3 2.800-2 4.600-4.800 3.800l-6 6c-.8.700-1.900-.4-1.100-1.100z"/>
 <path d="M8 65.200c-1.200-1.400-5.600-1.600-5.600 1.200 0 3 6 1.900 6 5 0 3-4.800 3-6.400 1.300M5.300 62.300v13.200" stroke-width="1.100"/>
</svg>
<span class="t serif" style="left:150px;top:42.200px;font-size:7.600px;font-weight:bold;color:#4a4a4a" id="s5a">Government of Mongolia</span>
<span class="t serif i5" style="top:60.900px" id="s5b">PPP (Public-Private Partnership)</span>
<div class="t serif i5" style="top:81.600px;line-height:8.800px" id="s5c">Foreign direct investment<br>(FDI)</div>
<div class="t serif i5" style="top:104.300px;line-height:10.100px" id="s5d">Korean ODA and loans (in<br>planning)</div>
<span class="t serif" style="left:192.300px;top:131px;font-size:12.300px;font-weight:bold;color:#3c3c54" id="s5e">Budget</span>
<span class="t" style="left:192.800px;top:153.800px;font-size:4.900px;color:#555" id="s5f">$1.5 billion (USD).</span>
</div></div>
<div class="sl" id="s6" style="left:34px;top:489px"><div class="in">
<svg style="left:0;top:0" width="119" height="178" viewBox="0 0 119 178">
 <defs>
  <linearGradient id="sk6" x1=".95" y1="0" x2=".3" y2="1"><stop offset="0" stop-color="#2b4a8a"/><stop offset=".22" stop-color="#4a6cae"/><stop offset=".45" stop-color="#7f96d0"/><stop offset=".66" stop-color="#c9b8e0"/><stop offset=".85" stop-color="#f3d6da"/><stop offset="1" stop-color="#fbe6cf"/></linearGradient>
  <linearGradient id="tw6" x1="0" y1="0" x2="1" y2="0"><stop offset="0" stop-color="#dce8fa"/><stop offset=".3" stop-color="#9db4dc"/><stop offset=".75" stop-color="#7f98c6"/><stop offset="1" stop-color="#a9bee0"/></linearGradient>
  <linearGradient id="gd6" x1="0" y1="0" x2="0" y2="1"><stop offset="0" stop-color="#9aa4ac"/><stop offset=".25" stop-color="#6f7d88"/><stop offset="1" stop-color="#465262"/></linearGradient>
  <filter id="bl6" x="-20%" y="-20%" width="140%" height="140%"><feGaussianBlur stdDeviation="1.500"/></filter>
  <filter id="bl6b" x="-20%" y="-20%" width="140%" height="140%"><feGaussianBlur stdDeviation=".7"/></filter>
 </defs>
 <g id="cityall">
 <rect width="119" height="112" fill="url(#sk6)"/>
 <g filter="url(#bl6)" fill="#efd6ea"><ellipse cx="95" cy="49" rx="21" ry="8"/><ellipse cx="70" cy="54" rx="14" ry="4.500"/><ellipse cx="52" cy="52" rx="8" ry="3" opacity=".7"/><ellipse cx="104" cy="33" rx="12" ry="6" opacity=".65"/><ellipse cx="91" cy="23" rx="7" ry="3.500" opacity=".55"/><ellipse cx="112" cy="22" rx="6" ry="3" opacity=".5"/><ellipse cx="62" cy="33" rx="7" ry="2" opacity=".35"/><ellipse cx="38" cy="50" rx="5" ry="1.600" opacity=".4"/><ellipse cx="58" cy="75" rx="9" ry="1.600" opacity=".5"/></g>
 <g filter="url(#bl6b)" fill="#c48ea8" opacity=".6"><ellipse cx="35" cy="86" rx="10" ry="1.300"/><ellipse cx="80" cy="85" rx="9" ry="1.500"/><ellipse cx="8" cy="93" rx="8" ry="1.200"/></g>
 <rect x="0" y="108" width="119" height="70" fill="url(#gd6)"/>
 <path d="M0 105h88v6H0z" fill="#c2b4c8" opacity=".85"/>
 <path d="M88.300 114V74l2.500-5 3.800-4 1.200 4 2.600 3 2.600 4v38z" fill="url(#tw6)"/>
 <path d="M105.500 114V84l2.500-6 4-4.500 3.500 3 2.700 5.500v32z" fill="url(#tw6)"/>
 <rect x="103.500" y="96" width="2" height="17" fill="#9aa8c8"/>
 <g fill="#b2b8dc"><rect x="30.300" y="93" width="5.400" height="17"/><rect x="37" y="94.800" width="3" height="15"/><rect x="40.500" y="95.500" width="4" height="15"/><rect x="45" y="97" width="3" height="13"/><rect x="48" y="96.500" width="3.300" height="14"/><rect x="65.600" y="96.600" width="4" height="13"/><rect x="70" y="97.500" width="3" height="12"/><rect x="55" y="105" width="15" height="6" fill="#8a92b4"/><rect x="78" y="102" width="2" height="8" opacity=".7"/><rect x="82" y="100" width="2.500" height="10" opacity=".7"/></g>
 <path d="M0 112l60-2 28 2v3L0 122z" fill="#9aa6b2"/>
 <path d="M0 115l26-2 12 1.500L0 121z" fill="#8fb874"/>
 <path d="M0 121l87-7v3L0 144z" fill="#66727e"/>
 <path d="M83 119h36v59H78l8-35z" fill="#b0a9c6"/>
 <path d="M108 126h11v16h-11z" fill="#8f98b4"/>
 <path d="M106 146h13v32h-8z" fill="#5f8a42"/>
 <path d="M48 160l10-22 26-24-4 20-14 44H44z" fill="#7f96ba"/>
 <path d="M0 148l30-13 55-21 2 2-50 25L0 163z" fill="#d6dff0"/>
 <path d="M0 155l37-17 48-22-46 26L0 169z" fill="#6b84ae"/>
 <path d="M0 165l40-24 46-24-30 24-48 37H0z" fill="#353c4c"/>
 <g fill="#3f6a2c" filter="url(#bl6b)"><ellipse cx="2" cy="129" rx="3" ry="3.500"/><ellipse cx="7" cy="127" rx="4" ry="3.300"/><ellipse cx="15" cy="125" rx="4" ry="3"/><ellipse cx="24" cy="130" rx="3.500" ry="3"/><ellipse cx="29" cy="128" rx="3" ry="3"/><ellipse cx="27" cy="122" rx="5" ry="2.400"/><ellipse cx="38" cy="120" rx="6" ry="2.300"/><ellipse cx="50" cy="117.300" rx="7" ry="2"/><ellipse cx="62" cy="114.500" rx="7" ry="1.600"/><ellipse cx="80" cy="113" rx="10" ry="1.500"/>
 <ellipse cx="46" cy="153" rx="6.500" ry="6.500"/><ellipse cx="38" cy="163" rx="9" ry="8"/><ellipse cx="28" cy="174" rx="14" ry="7"/><ellipse cx="79" cy="141" rx="6" ry="6.500"/><ellipse cx="73" cy="154" rx="8" ry="9"/><ellipse cx="64" cy="169" rx="11" ry="10"/><ellipse cx="52" cy="175" rx="8" ry="5"/><ellipse cx="86" cy="124" rx="3" ry="5"/><ellipse cx="84" cy="132" rx="4" ry="5"/><ellipse cx="96" cy="124" rx="2.500" ry="4"/><ellipse cx="116" cy="150" rx="4" ry="5"/><ellipse cx="117" cy="146" rx="3" ry="3"/></g>
 <g fill="#7fab56" opacity=".5" filter="url(#bl6b)"><ellipse cx="44" cy="150" rx="3" ry="3"/><ellipse cx="36" cy="159" rx="4" ry="4"/><ellipse cx="71" cy="150" rx="3.500" ry="4"/><ellipse cx="61" cy="164" rx="5" ry="4"/><ellipse cx="77" cy="138" rx="3" ry="3"/><ellipse cx="25" cy="170" rx="6" ry="3"/></g>
 <g fill="#2a2a38"><rect x="86" y="148" width=".8" height="2.400"/><rect x="89" y="150" width=".8" height="2.400"/><rect x="98" y="146" width=".8" height="2.400"/><rect x="100.500" y="147" width=".8" height="2.400"/><rect x="96" y="160" width=".9" height="2.800"/><rect x="99" y="161" width=".9" height="2.800"/><rect x="104" y="174" width="1" height="3"/></g>
 </g>
</svg>
<span class="t serif" style="left:136.600px;top:14px;font-size:15.450px;color:#4a72c8;letter-spacing:.2px" id="s6h">International cooperation</span>
<div class="t serif b6" style="top:46.800px;line-height:10.150px" id="s6a"><b>2023</b>: MOUs signed with South Korean firms for<br>project consulting and planning.</div>
<div class="t serif b6" style="top:69.700px;line-height:10.150px" id="s6b"><b>2024</b>: Announcement of metro development as<br>national priority.</div>
<span class="t serif b6" style="top:93.200px" id="s6c">Partners include:</span>
<span class="t serif c6" style="top:104.800px" id="s6d">Hyundai E&amp;C</span>
<span class="t serif c6" style="top:117px" id="s6e">Korea Railroad Corporation (KORAIL)</span>
<span class="t serif c6" style="top:129.200px" id="s6f">Seoul Metro</span>
<span class="t serif c6" style="top:141px" id="s6g">Hyundai Rotem</span>
<span class="t serif c6" style="top:153.200px" id="s6i">Dohwa engineering Co, Ltd</span>
<div class="abs d6" style="left:136.800px;top:52.9px"></div><div class="abs d6" style="left:136.800px;top:75.7px"></div><div class="abs d6" style="left:136.800px;top:97.8px"></div>
<div class="abs d6" style="left:146.600px;top:109.8px"></div><div class="abs d6" style="left:146.600px;top:122.0px"></div><div class="abs d6" style="left:146.600px;top:134.2px"></div><div class="abs d6" style="left:146.600px;top:146.0px"></div><div class="abs d6" style="left:146.600px;top:158.2px"></div>
</div></div>
<div class="sl" id="s7" style="left:397px;top:489px"><div class="in">
<svg style="left:0;top:0" width="317" height="103" viewBox="0 0 317 103">
 <defs>
  <linearGradient id="sk7" x1="0" y1="0" x2="1" y2="0"><stop offset="0" stop-color="#a9a4a8"/><stop offset=".5" stop-color="#c2c0c4"/><stop offset="1" stop-color="#b4b4ba"/></linearGradient>
  <linearGradient id="gv7" x1="0" y1="0" x2="0" y2="1"><stop offset="0" stop-color="#8e8c90"/><stop offset="1" stop-color="#78767c"/></linearGradient>
  <linearGradient id="wd7" x1="0" y1="0" x2="1" y2="1"><stop offset="0" stop-color="#a4a8a2"/><stop offset=".5" stop-color="#7e827e"/><stop offset="1" stop-color="#8e928e"/></linearGradient><linearGradient id="sd7" x1="0" y1="0" x2="1" y2="0"><stop offset="0" stop-color="#b4aea8"/><stop offset="1" stop-color="#8e8a8a"/></linearGradient>
  <filter id="bl7" x="-5%" y="-5%" width="110%" height="110%"><feGaussianBlur stdDeviation=".6"/></filter><pattern id="sp7" width="3" height="3" patternUnits="userSpaceOnUse"><rect x=".2" y=".3" width=".9" height=".8" fill="#4e4c50"/><rect x="1.700" y="1.600" width=".9" height=".9" fill="#c4c2c6"/><rect x="1.900" y=".2" width=".6" height=".6" fill="#5a585c"/><rect x=".4" y="2" width=".7" height=".7" fill="#b0aeb2"/></pattern>
 </defs>
 <rect width="317" height="103" fill="url(#sk7)"/>
 <!-- left bg -->
 <rect x="0" y="36" width="60" height="12" fill="#9a8a80"/>
 <rect x="0" y="46" width="60" height="57" fill="#5a5656"/><rect x="0" y="46" width="60" height="57" fill="url(#sp7)" opacity=".35"/>
 <path d="M0 52h58v3H0zM0 66h58v2.500H0zM0 84h58v3H0z" fill="#8a8684"/>
 <rect x="0" y="35" width="58" height="4" fill="#c4c6d0" opacity=".7"/>
 <g stroke="#6e7078" stroke-width="1.300" fill="none"><path d="M11 8v40M31 6v36M52 4v36M11 10h46M11 14h46M4 26h54"/></g>
 <g stroke="#98a2b2" stroke-width="1.800" fill="none"><path d="M13 100V62l22-24M36 100V60l20-22M13 74h24M14 86h24M18 97h24"/></g>
 <!-- gravel & right -->
 <path d="M150 46h167v57H140z" fill="url(#gv7)"/><path d="M150 46h167v57H140z" fill="url(#sp7)" opacity=".55"/>
 <path d="M216 44h6l46 59h-46z" fill="#d2d2d8" opacity=".85"/>
 <path d="M216 43l3 60M219.500 43l50 60" stroke="#6e4434" stroke-width="1.800" fill="none"/>
 <path d="M236 46l81 26v12z" fill="#6a6668" opacity=".6"/>
 <!-- far trains + gantries -->
 <path d="M226 30h64v22l-64-8z" fill="#a8a4a4"/><path d="M226 39l64 4v6l-64-7z" fill="#a8864c"/>
 <g stroke="#8e949e" stroke-width="1.100" fill="none"><path d="M184 15h48M230 8v40M236 1v52M236 8h81M236 12h81M262 20h55"/></g>
 <path d="M270 0h9l3 78h-16z" fill="#8a9098"/><path d="M272 0h5l2 76h-9z" fill="#a8aeb6"/>
 <rect x="252" y="50" width="16" height="16" fill="#8e96a4" opacity=".8"/>
 <!-- side of main train -->
 <path d="M150 0l8 2 52 40v4l-53 42-7 4z" fill="url(#sd7)"/>
 <path d="M150 40l60 3.500v2.200L150 60z" fill="#a8833f"/>
 <path d="M154 10l3 1v50l-3 2zM163 15l4 2v40l-4 3zM180 25l3 2v24l-3 2z" fill="#4a4a50"/>
 <path d="M150 66l58-21v2l-51 41-7 4z" fill="#5a5658"/>
 <!-- main train front -->
 <path d="M54.0 0.0L150.5 0.0L156.8 6.8L156.8 60.4L150.5 80.1L138.0 98.9L62.9 96.2L54.0 72.9z" fill="#bab2aa"/>
 <path d="M56.7 40.8L140.7 40.8L140.7 67.6L56.7 66.7z" fill="#a87e38"/>
 <path d="M58.5 0.0L140.2 0.0L140.2 40.8L58.5 40.8z" fill="#26262a"/>
 <path d="M62.0 12.5L118.4 11.8L118.4 36.8L61.5 37.2z" fill="url(#wd7)"/>
 <path d="M122.3 11.8L138.0 11.8L138.0 36.8L122.3 36.8z" fill="#7a7e7a"/>
 <path d="M65.1 0.0L139.5 0.0L139.5 7.9L65.1 8.2z" fill="#3c3c40"/>
 <path d="M66.5 1.4L75.5 1.4L75.5 6.8L66.5 6.8z" fill="#8a9090"/><path d="M129.1 1.4L138.0 1.4L138.0 6.8L129.1 6.8z" fill="#8a9090"/>
 <path d="M63.8 52.9L131.8 52.9L131.8 56.3L63.8 56.3z" fill="#1a1614"/>
 <path d="M64.4 52.6L72.8 52.6L72.8 56.5L64.4 56.5z" fill="#f03a2e"/><path d="M122.8 52.9L131.8 52.9L131.8 56.9L122.8 56.9z" fill="#f03a2e"/>
 <circle cx="96.500" cy="54.300" r="4.200" fill="#f4f4f0" stroke="#2a2a2a" stroke-width=".8"/>
 <path d="M79.9 71.2L113.9 71.2L113.9 93.5L79.9 93.5z" fill="#24242a"/>
 <path d="M84.4 74.7L109.4 74.7L109.4 90.8L84.4 90.8z" fill="#5c6066" opacity=".7"/>
 <path d="M70.1 70.3L76.3 70.3L76.3 74.7L70.1 74.7z" fill="#8c8e92"/><path d="M116.9 71.2L123.4 71.2L123.4 75.6L116.9 75.6z" fill="#8c8e92"/>
 <path d="M117.6 8.6L119.1 8.6L119.1 67.6L117.6 67.6z" fill="#2a2420"/>
 <!-- right train -->
 <path d="M284 20h33v54h-24l-9-6z" fill="#b6aea6"/><path d="M286 24h31v22h-31z" fill="#2c2c30"/><path d="M289 29h28v14h-28z" fill="#70747a"/><path d="M286 46h31v11h-31z" fill="#a88040"/><rect x="293" y="50.500" width="5" height="2" fill="#f04a30"/><path d="M303 58h14v12h-14z" fill="#2a2a2e"/>
</svg>
<span class="t serif" style="left:16.300px;top:110.900px;font-size:9.900px;color:#463cc4" id="s7h">Brief on Seoul Subway Line 9</span>
<div class="abs l7" style="left:33.700px;width:257.300px;text-align:justify;text-align-last:justify;top:121.3px"><b>Seoul Subway Line 9 is a highly suitable model for Ulaanbaatar's first metro project</b> because it is a <b>modern,</b></div>
<div class="abs l7" style="left:14.200px;width:276.800px;text-align:justify;text-align-last:justify;top:128.0px"><b>underground heavy metro</b> developed through a <b>Public-Private Partnership (PPP)</b>, which helps reduce the government's</div>
<div class="abs l7" style="left:14.200px;width:276.800px;top:134.7px">financial burden.</div>
<div class="abs l7" style="left:33.700px;width:257.300px;text-align:justify;text-align-last:justify;top:141.0px">The line operates successfully in <b>cold weather conditions</b>, similar to Ulaanbaatar, and features <b>advanced signaling</b></div>
<div class="abs l7" style="left:14.200px;width:276.800px;text-align:justify;text-align-last:justify;top:147.7px"><b>(CBTC)</b>, <b>platform screen doors</b>, and <b>efficient express/local train operations</b>. With a comparable scale and construction</div>
<div class="abs l7" style="left:14.200px;width:276.800px;top:154.7px">cost, Line 9 offers a realistic and proven blueprint for implementing Ulaanbaatar's 17.7 km Phase 1 underground metro line.</div>
</div></div>
<div class="sl" id="s8" style="left:760px;top:489px"><div class="in">
<span class="t serif" style="left:92.300px;top:25.800px;font-size:15.200px;color:#463cc4" id="s8h">Seoul Subway Line 9</span>
<svg style="left:98.800px;top:45px" width="120" height="115" viewBox="100 45 120 115">
 <circle cx="159.400" cy="101.400" r="34.350" fill="none" stroke="#e9e7f3" stroke-width="30.500"/>
 <g stroke="#fbfaff" stroke-width="1.300" fill="none">
  <path d="M159.400 51.800l8.500 11-7.500 19.500"/>
  <path d="M209 101.400l-11 8.500-19.500-7.500"/>
  <path d="M159.400 151l-8.500-11 7.500-19.500"/>
  <path d="M109.800 101.400l11-8.500 19.500 7.500"/>
 </g>
 <g font-family="Liberation Serif, serif" font-size="8" fill="#555" text-anchor="middle"><text x="137.400" y="77.200">1</text><text x="186.200" y="86.300">2</text><text x="177.500" y="134.300">3</text><text x="129.500" y="126.400">4</text></g>
</svg>
<span class="t serif h8" style="right:215.300px" id="s8a">Type</span>
<span class="t serif p8" style="right:206.800px;top:78.200px" id="s8b">Underground heavy metro with express service.</span>
<span class="t serif h8" style="left:215.100px" id="s8c">Opened</span>
<span class="t serif p8" style="left:215.100px;top:77.100px" id="s8d">July 24, 2009</span>
<span class="t serif h8" style="right:215.300px;top:119px" id="s8e">Operator</span>
<div class="t serif p8" style="right:214.800px;top:130px;text-align:right;line-height:7.850px" id="s8f">Seoul Line9 Operation<br>(a joint venture between<br>Hyundai Rotem and RATP Dev Transdev Asia)</div>
<span class="t serif h8" style="left:215.100px;top:119px" id="s8g">Daily Ridership</span>
<span class="t serif p8" style="left:215.100px;top:131px" id="s8i">Approximately 616,000 passengers (2019)</span>
</div></div>
<div class="sl" id="s9" style="left:1123px;top:489px"><div class="in">
<span class="t serif" style="left:17.400px;top:21.400px;font-size:12.300px;color:#463cc4;letter-spacing:.06px" id="s9h">Seoul Subway line 9 and Applicability to Ulaanbaatar</span>
<div class="abs th9" style="left:17.1px;top:50.1px;width:88.6px;height:12.7px;background:#4472c4">Feature</div><div class="abs th9" style="left:106.6px;top:50.1px;width:88.4px;height:12.7px;background:#4472c4">Seoul Subway Line 9</div><div class="abs th9" style="left:195.9px;top:50.1px;width:88.0px;height:12.7px;background:#4472c4">Applicability to Ulaanbaatar</div>
<div class="abs th9" style="left:17.1px;top:63.9px;width:88.6px;height:15.9px;background:#4472c4">Type</div><div class="abs td9" style="left:106.6px;top:63.9px;width:88.4px;height:15.9px;background:#cfd5ea">Underground heavy metro</div><div class="abs td9" style="left:195.9px;top:63.9px;width:88.0px;height:15.9px;background:#cfd5ea">Matches Ulaanbaatar's underground plan</div>
<div class="abs th9" style="left:17.1px;top:80.9px;width:88.6px;height:15.5px;background:#4472c4">Length</div><div class="abs td9" style="left:106.6px;top:80.9px;width:88.4px;height:15.5px;background:#e9ebf5">40.6 km</div><div class="abs td9" style="left:195.9px;top:80.9px;width:88.0px;height:15.5px;background:#e9ebf5">Comparable to Ulaanbaatar's 17.7 km</div>
<div class="abs th9" style="left:17.1px;top:97.2px;width:88.6px;height:11.9px;background:#4472c4">Construction Cost</div><div class="abs td9" style="left:106.6px;top:97.2px;width:88.4px;height:11.9px;background:#cfd5ea">~USD 827 million (Phase 1)</div><div class="abs td9" style="left:195.9px;top:97.2px;width:88.0px;height:11.9px;background:#cfd5ea">Provides a cost benchmark</div>
<div class="abs th9" style="left:17.1px;top:109.9px;width:88.6px;height:16.3px;background:#4472c4">Funding Model</div><div class="abs td9" style="left:106.6px;top:109.9px;width:88.4px;height:16.3px;background:#e9ebf5">Public-Private Partnership (BTO)</div><div class="abs td9" style="left:195.9px;top:109.9px;width:88.0px;height:16.3px;background:#e9ebf5">Viable model for Ulaanbaatar</div>
<div class="abs th9" style="left:17.1px;top:127.0px;width:88.6px;height:15.9px;background:#4472c4">Climate Adaptability</div><div class="abs td9" style="left:106.6px;top:127.0px;width:88.4px;height:15.9px;background:#cfd5ea">Designed for cold winters</div><div class="abs td9" style="left:195.9px;top:127.0px;width:88.0px;height:15.9px;background:#cfd5ea">Suitable for Ulaanbaatar's climate</div>
<div class="abs th9" style="left:17.1px;top:143.7px;width:88.6px;height:15.8px;background:#4472c4">Operational Experience</div><div class="abs td9" style="left:106.6px;top:143.7px;width:88.4px;height:15.8px;background:#e9ebf5">Over a decade of successful operation</div><div class="abs td9" style="left:195.9px;top:143.7px;width:88.0px;height:15.8px;background:#e9ebf5">Offers operational insights</div>
</div></div>
<div class="sl" id="s10" style="left:1486px;top:489px"><div class="in">
<svg style="left:0;top:0" width="317" height="48" viewBox="0 0 317 48">
 <defs>
  <radialGradient id="bn10" cx=".52" cy=".5" r=".55" gradientTransform="scale(1 1.400) translate(0 -.14)"><stop offset="0" stop-color="#ebe0ee"/><stop offset=".55" stop-color="#e2d3e4"/><stop offset="1" stop-color="#dac8de"/></radialGradient>
  <pattern id="gr10" width="9" height="9" patternUnits="userSpaceOnUse" patternTransform="rotate(45)"><path d="M0 0h9M0 0v9" stroke="#f6f0f8" stroke-width=".5" fill="none"/></pattern>
  <pattern id="gr10b" width="3.500" height="3.500" patternUnits="userSpaceOnUse"><path d="M0 0h3.500M0 0v3.500" stroke="#f4eef6" stroke-width=".35" fill="none"/></pattern><radialGradient id="mk10" cx=".5" cy=".5" r=".5"><stop offset="0" stop-color="#fff" stop-opacity="1"/><stop offset=".6" stop-color="#fff" stop-opacity=".7"/><stop offset="1" stop-color="#fff" stop-opacity="0"/></radialGradient>
  <mask id="m10"><ellipse cx="160" cy="26" rx="125" ry="34" fill="url(#mk10)"/></mask>
 </defs>
 <rect width="317" height="48" fill="url(#bn10)"/>
 <rect width="317" height="48" fill="url(#gr10)" mask="url(#m10)" opacity=".9"/><rect width="317" height="48" fill="url(#gr10b)" mask="url(#m10)" opacity=".7"/>
 <g fill="none" stroke-width="1" opacity=".85">
  <path d="M99.800 0L123 23.800h59L204.400 0M137.300 23.800L114 48" stroke="#8a5aa8" stroke-width=".9"/>
  <path d="M134.600 0l23.300 23.800M166.800 0v23.800M158.800 23.800V48M224.900 0l-41.100 42.200h-16.100" stroke="#3cb0b2"/>
  <path d="M183.800 0l-16.100 15.700M197.200 0v19.300l-4.500 4.500H182" stroke="#f2ba6c"/>
  <path d="M68.500 20v12c0 4 2 6.100 6.200 6.100" stroke="#7cd0dc" stroke-width=".8"/>
  <path d="M74.700 38.200H166" stroke="#c69ac8" stroke-width=".9" stroke-dasharray="6 1"/>
  <path d="M166 38.200V48" stroke="#d070c0" stroke-width="1"/>
  <path d="M112 30l-8 10M116 33.500h40l6-6M190 34h24M214 35l6-6" stroke="#a8dce0" stroke-width=".6"/>
 </g>
 <circle cx="68.800" cy="18.800" r="1.900" fill="#3ab4e0"/>
</svg>
<span class="t serif" style="left:13.600px;top:58px;font-size:10.800px;color:#463cc4;letter-spacing:.62px" id="s10h">My Concern on Ulaanbaatar Metro Project Implementation</span>
<div class="abs p10" style="top:76.9px">One of my main concerns regarding the implementation of the Ulaanbaatar Metro Project is the lack<br>of prior experience in building and operating a metro system in Mongolia. Since this is the country's<br>first attempt, there is a risk of technical, financial, and institutional challenges arising during the<br>planning and construction phases.</div>
<svg class="ov" style="left:12.900px;top:79.1px" width="19.200" height="22.5" viewBox="0 0 19.200 22.800"><path d="M0 0L9.600 3.200 19.200 0V19.600L9.600 22.800 0 19.600z" fill="#ebe9f4"/><text x="9.600" y="14.300" font-family="Liberation Sans, sans-serif" font-size="5.500" fill="#666" text-anchor="middle">1</text></svg>
<div class="abs p10" style="top:108.9px">Additionally, the extreme winter climate could cause issues in underground construction, especially<br>in frozen soil conditions. Another concern is the sustainability of long-term funding, given the high<br>&nbsp;initial investment and potential economic instability. Without careful planning, coordination, and<br>professional capacity building, the project may face delays or increased costs.</div>
<svg class="ov" style="left:12.900px;top:107.5px" width="19.200" height="23.0" viewBox="0 0 19.200 22.800"><path d="M0 0L9.600 3.200 19.200 0V19.600L9.600 22.800 0 19.600z" fill="#ebe9f4"/><text x="9.600" y="14.300" font-family="Liberation Sans, sans-serif" font-size="5.500" fill="#666" text-anchor="middle">2</text></svg>
<div class="abs p10" style="top:140.7px">Despite these concerns, I believe that with strong political will, international cooperation, and<br>phased implementation, the Ulaanbaatar Metro can become a transformative solution for the city's<br>transportation problems.</div>
<svg class="ov" style="left:12.900px;top:139.5px" width="19.200" height="22.5" viewBox="0 0 19.200 22.800"><path d="M0 0L9.600 3.200 19.200 0V19.600L9.600 22.800 0 19.600z" fill="#ebe9f4"/><text x="9.600" y="14.300" font-family="Liberation Sans, sans-serif" font-size="5.500" fill="#666" text-anchor="middle">3</text></svg>
</div></div>
<div class="sl" id="s11" style="left:34px;top:732px;border-color:transparent;box-shadow:none"><div class="in">
<svg style="left:198px;top:0" width="119" height="178" viewBox="0 0 119 178"><use href="#cityall"/></svg>
<div class="t serif" style="left:16.900px;top:90.500px;font-size:14px;font-weight:bold;line-height:14.900px;color:#3a30cc;letter-spacing:.28px" id="s11h">THANK YOU FOR<br>ATTENTION.</div>
</div></div>
</div>

<!-- ================= STATUS BAR ================= -->
<div class="abs" id="status"></div>
<div id="st">
<span class="t sb" style="left:15px;letter-spacing:.07px" id="st1">Slide 11 of 11</span>
<span class="t sb" style="left:137px" id="st2">English (United States)</span>
<svg style="left:288px;top:997px" width="19" height="19" viewBox="0 0 19 19" fill="none" stroke="#3b3b3b" stroke-width="1.200">
 <circle cx="8.300" cy="3" r="1.900"/><path d="M1.500 5.300c2 .8 4.200 1.200 6.800 1.200s4.800-.4 6.800-1.200M5.800 6.400v4.800L3.700 17M10.800 6.400v3.500"/><path d="M9.500 13.500l3 3.200 5-6" stroke-width="1.400"/>
</svg>
<span class="t sb" style="left:311.500px;letter-spacing:-.01px" id="st3">Accessibility: Good to go</span>
<!-- view buttons -->
<div class="abs" style="left:1517px;top:994px;width:50px;height:26px;background:#dedddd"></div>
<svg style="left:1483px;top:998px" width="19" height="17" viewBox="0 0 19 17" fill="none" stroke="#4a4a4a" stroke-width="1.300"><path d="M.7.700h17.200v15.300H.7zM4.200.7v15.300M4.200 11.300h13.700"/><rect x="8.300" y="4.200" width="6" height="3.300" fill="#9a9a9a" stroke-width="1"/></svg>
<svg style="left:1533px;top:998px" width="19" height="17" viewBox="0 0 19 17" fill="none" stroke="#4a4a4a" stroke-width="1.300"><rect x=".7" y="1.200" width="6.800" height="5"/><rect x="10.900" y="1.200" width="6.800" height="5"/><rect x=".7" y="10" width="6.800" height="5"/><rect x="10.900" y="10" width="6.800" height="5"/></svg>
<svg style="left:1582px;top:997px" width="19" height="18" viewBox="0 0 19 18" fill="none" stroke="#4a4a4a" stroke-width="1.200"><path d="M9.200 3C7 1.300 4 1 .8 1.800v13.500c3.200-.8 6.200-.5 8.400 1.200 2.200-1.700 5.200-2 8.400-1.200V1.800C14.400 1 11.400 1.300 9.200 3zM9.200 3v13.500"/><path d="M3 5h4M3 7.500h4M3 10h4M3 12.500h4M11.400 5h4M11.400 7.500h4M11.400 10h4M11.400 12.500h4" stroke-width="1"/></svg>
<svg style="left:1633px;top:997px" width="17" height="19" viewBox="0 0 17 19" fill="none" stroke="#4a4a4a" stroke-width="1.300"><path d="M0 .8h17M1.800.800v9.200h13.400V.8M8.500 10v7.500M4.200 17.700h8.600"/><path d="M5.500 4.300h6" stroke-width="1.100"/></svg>
<!-- zoom -->
<div class="abs" style="left:1674px;top:1006px;width:9.500px;height:1px;background:#3a3a3a"></div>
<div class="abs" style="left:1690px;top:1006.800px;width:125px;height:1px;background:#6a6a6a"></div>
<div class="abs" style="left:1725px;top:999.500px;width:5.600px;height:14.500px;background:#5e5e5e;border-radius:1px"></div>
<div class="abs" style="left:1752px;top:1003px;width:1px;height:8px;background:#6a6a6a"></div>
<div class="abs" style="left:1821px;top:1006px;width:10px;height:1px;background:#3a3a3a"></div>
<div class="abs" style="left:1825px;top:1001.500px;width:1px;height:10px;background:#3a3a3a"></div>
</div>

</body></html>
